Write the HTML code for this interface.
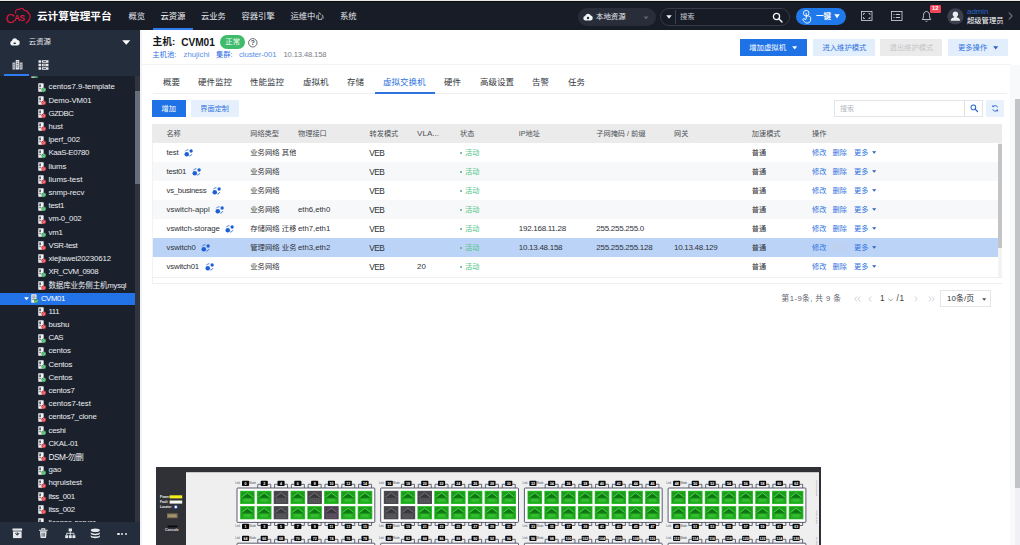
<!DOCTYPE html>
<html lang="zh-CN"><head><meta charset="utf-8"><title>云计算管理平台</title>
<style>
html,body{margin:0;padding:0;}
body{width:1020px;height:545px;overflow:hidden;position:relative;background:#fff;font-family:"Liberation Sans","Noto Sans CJK SC",sans-serif;}
.t{position:absolute;white-space:nowrap;}
.b{position:absolute;}
svg{position:absolute;overflow:visible;}
</style></head><body>

<div class="b" style="left:0px;top:0px;width:1020px;height:545px;background:#f1f3f7;"></div>
<div class="b" style="left:141.5px;top:30.2px;width:878.5px;height:514.8px;background:#ffffff;"></div>
<div class="b" style="left:0px;top:0px;width:1020px;height:30.2px;background:#181c27;"></div>
<div class="b" style="left:0px;top:0px;width:1020px;height:1.8px;background:#0b0c10;"></div>
<div class="b" style="left:0px;top:0px;width:1020px;height:0.8px;background:#e9e9ea;"></div>
<svg style="left:4px;top:5px" width="30" height="22" viewBox="4 5 30 22" font-family='"Liberation Sans",sans-serif'>
<path d="M15.6 13.2 C15 10.4 17 8.6 19.2 9.6 C20.4 7.6 23.6 8 24.2 10.4 C26.4 10.4 28.2 11.8 28.4 13.6" fill="none" stroke="#d8143c" stroke-width="1.1" stroke-linecap="round"/>
<path d="M28.2 12.6 C31.6 15.4 30.4 20.6 26.2 23" fill="none" stroke="#d8143c" stroke-width="1.1" stroke-linecap="round"/>
<text x="14" y="21.4" font-size="8.2" font-weight="700" fill="#e0183f" letter-spacing="-0.3">AS</text>
<text x="5.6" y="22.6" font-size="13" fill="#dc163d">C</text>
</svg>
<span class="t" style="left:36.9px;top:10.15px;font-size:10.7px;line-height:13.91px;color:#ffffff;font-weight:700;">云计算管理平台</span>
<span class="t" style="left:128.5px;top:10.8px;font-size:8.3px;line-height:10.79px;color:#e4e7ec;">概览</span>
<span class="t" style="left:160.5px;top:10.8px;font-size:8.3px;line-height:10.79px;color:#ffffff;">云资源</span>
<span class="t" style="left:201px;top:10.8px;font-size:8.3px;line-height:10.79px;color:#e4e7ec;">云业务</span>
<span class="t" style="left:241.5px;top:10.8px;font-size:8.3px;line-height:10.79px;color:#e4e7ec;">容器引擎</span>
<span class="t" style="left:290.5px;top:10.8px;font-size:8.3px;line-height:10.79px;color:#e4e7ec;">运维中心</span>
<span class="t" style="left:340px;top:10.8px;font-size:8.3px;line-height:10.79px;color:#e4e7ec;">系统</span>
<div class="b" style="left:153px;top:28.2px;width:40px;height:2.2px;background:#2f7cf0;"></div>
<div class="b" style="left:578.3px;top:8.2px;width:78px;height:17.5px;background:#282d39;border-radius:9px;"></div>
<svg style="left:583px;top:12.8px" width="10" height="8" viewBox="0 0 20 16"><path d="M5 15 A4.5 4.5 0 0 1 4.2 6.1 A6 6 0 0 1 15.6 5.2 A5 5 0 0 1 15.5 15 Z" fill="#f2f3f5"/><circle cx="10" cy="10" r="2.4" fill="#282d39"/></svg>
<span class="t" style="left:596px;top:12.29px;font-size:7.4px;line-height:9.62px;color:#e8eaee;">本地资源</span>
<svg style="left:642.5px;top:15.5px" width="6" height="4" viewBox="0 0 6 4"><path d="M0.5 0.5 L5.5 0.5 L3 3.5 Z" fill="#5d6472"/></svg>
<div class="b" style="left:659.5px;top:8.2px;width:130px;height:17.5px;background:#171b25;border-radius:9px;border:1px solid #343a47;box-sizing:border-box;"></div>
<svg style="left:665.5px;top:14.6px" width="6" height="4" viewBox="0 0 6 4"><path d="M0.3 0.3 L5.7 0.3 L3 3.7 Z" fill="#f2f3f5"/></svg>
<div class="b" style="left:675px;top:9.5px;width:0.8px;height:14px;background:#3a414e;"></div>
<span class="t" style="left:680px;top:12.36px;font-size:7.3px;line-height:9.49px;color:#c4c8d0;">搜索</span>
<svg style="left:771.5px;top:11.5px" width="11" height="11" viewBox="0 0 22 22"><circle cx="9" cy="9" r="6.2" fill="none" stroke="#f2f3f5" stroke-width="2.6"/><path d="M13.6 13.6 L20 20" stroke="#f2f3f5" stroke-width="3" stroke-linecap="round"/></svg>
<div class="b" style="left:796px;top:7.8px;width:50px;height:16.9px;background:#2079ea;border-radius:9px;"></div>
<svg style="left:799.8px;top:9.1px" width="13" height="15" viewBox="0 0 26 30"><circle cx="12.4" cy="8.4" r="5.6" fill="none" stroke="#fff" stroke-width="1.8"/><path d="M12.4 8.4 V19.5 M12.4 14.4 C15.4 13.2 19.4 14.2 21.4 16.4 L21 23.6 C20 26.8 17 28.4 13.6 28.2 C10 27.6 7.6 24.4 5.4 20.8 C6 18.6 8.6 19 11.6 21.4" fill="none" stroke="#fff" stroke-width="1.8" stroke-linecap="round" stroke-linejoin="round"/></svg>
<span class="t" style="left:816px;top:11.76px;font-size:7.6px;line-height:9.88px;color:#ffffff;font-weight:700;">一键</span>
<svg style="left:833.5px;top:14.4px" width="6" height="4.5" viewBox="0 0 6 4.5"><path d="M0.2 0.3 L5.8 0.3 L3 4.2 Z" fill="#fff"/></svg>
<svg style="left:861px;top:11px" width="11.5" height="10" viewBox="0 0 23 20"><rect x="1" y="1" width="21" height="18" fill="none" stroke="#d8dbe0" stroke-width="1.6"/><path d="M5 8V5H8 M15 5H18V8 M18 12V15H15 M8 15H5V12" fill="none" stroke="#d8dbe0" stroke-width="1.5"/></svg>
<svg style="left:890.5px;top:11px" width="11.5" height="10" viewBox="0 0 23 20"><rect x="1" y="1" width="21" height="18" fill="none" stroke="#d8dbe0" stroke-width="1.6"/><path d="M5 7H7 M9.5 7H18 M5 13H7 M9.5 13H18" fill="none" stroke="#d8dbe0" stroke-width="1.8"/></svg>
<svg style="left:920.5px;top:10px" width="11" height="12.5" viewBox="0 0 22 25"><path d="M11 3 C6.5 3 5 7 5 11 C5 15 4 17.5 2.5 19 L19.5 19 C18 17.5 17 15 17 11 C17 7 15.5 3 11 3 Z" fill="none" stroke="#d8dbe0" stroke-width="1.7" stroke-linejoin="round"/><path d="M8.6 21.5 C9.5 23.3 12.5 23.3 13.4 21.5" fill="none" stroke="#d8dbe0" stroke-width="1.6"/></svg>
<div class="b" style="left:930px;top:4.5px;width:10.7px;height:8.3px;background:#f0465a;border-radius:1.2px;"></div>
<span class="t" style="left:932.1px;top:4.93px;font-size:5.8px;line-height:7.54px;color:#ffffff;font-weight:700;">12</span>
<svg style="left:947px;top:8.2px" width="16.8" height="16.8" viewBox="0 0 34 34"><circle cx="17" cy="17" r="16.5" fill="#3a404c"/><circle cx="17" cy="12.6" r="5.4" fill="#eceef1"/><path d="M7.5 26 C8 20 12 18.6 17 18.6 C22 18.6 26 20 26.5 26 Z" fill="#eceef1"/><rect x="14.5" y="15" width="5" height="6" fill="#eceef1"/></svg>
<span class="t" style="left:967px;top:6.87px;font-size:7.9px;line-height:10.27px;color:#2a66d0;">admin</span>
<span class="t" style="left:967px;top:16.45px;font-size:7.3px;line-height:9.49px;color:#ffffff;">超级管理员</span>
<svg style="left:1007.5px;top:12px" width="5" height="8" viewBox="0 0 5 8"><path d="M0.8 0.6 L4 4 L0.8 7.4" fill="none" stroke="#5a606c" stroke-width="1.5"/></svg>
<div class="b" style="left:0px;top:30.2px;width:140px;height:46.2px;background:#242d3b;"></div>
<div class="b" style="left:0px;top:76.4px;width:140px;height:445.6px;background:#1b212c;"></div>
<div class="b" style="left:0px;top:522px;width:140px;height:23px;background:#242d3b;"></div>
<svg style="left:9.8px;top:37.2px" width="9.4" height="9.6" viewBox="0 0 20 18" preserveAspectRatio="none"><path d="M5 16 A4.6 4.6 0 0 1 4.2 6.9 A6 6 0 0 1 15.6 5.8 A5.1 5.1 0 0 1 15.5 16 Z" fill="#f2f3f5"/><path d="M7.6 10.5 H12.4 V13.2 H7.6 Z" fill="#242d3b"/></svg>
<span class="t" style="left:28.8px;top:36.99px;font-size:7.4px;line-height:9.62px;color:#e8eaee;">云资源</span>
<svg style="left:122px;top:39.5px" width="8.5" height="5" viewBox="0 0 8.5 5"><path d="M0.2 0.2 L8.3 0.2 L4.25 4.8 Z" fill="#ffffff"/></svg>
<svg style="left:11.5px;top:58.5px" width="11" height="11" viewBox="0 0 22 22"><rect x="1" y="7" width="5.5" height="14" fill="#c9ccd3"/><rect x="15.5" y="7" width="5.5" height="14" fill="#c9ccd3"/><rect x="7.5" y="2" width="7" height="19" fill="#e6e8ec"/><path d="M9.2 5.5H12.8M9.2 9H12.8M9.2 12.5H12.8M9.2 16H12.8M2.6 10.5H5M2.6 14H5M2.6 17.5H5M17 10.5H19.4M17 14H19.4M17 17.5H19.4" stroke="#242d3b" stroke-width="1.3"/></svg>
<svg style="left:37.5px;top:59.5px" width="11" height="10" viewBox="0 0 22 20"><rect x="1" y="0.5" width="5.4" height="5" fill="#e6e8ec"/><rect x="1" y="7.5" width="5.4" height="5" fill="#e6e8ec"/><rect x="1" y="14.5" width="5.4" height="5" fill="#e6e8ec"/><rect x="8" y="0.5" width="13" height="5" fill="#e6e8ec"/><rect x="8" y="7.5" width="13" height="5" fill="#e6e8ec"/><rect x="8" y="14.5" width="13" height="5" fill="#e6e8ec"/><path d="M10 3H16M10 10H16M10 17H16" stroke="#242d3b" stroke-width="1.3"/></svg>
<div class="b" style="left:4px;top:73.8px;width:24.8px;height:2.6px;background:#2f7cf0;"></div>
<div class="b" style="left:135.2px;top:76.4px;width:4.6px;height:445.6px;background:#30343e;"></div>
<div class="b" style="left:135.2px;top:91px;width:4.6px;height:93px;background:#676c7a;"></div>
<div class="b" style="left:0;top:0;width:1020px;height:545px;clip-path:inset(76.4px 884.8px 23px 0)">
<svg style="left:31.2px;top:68.5px" width="7.5" height="9.6" viewBox="0 0 15 19"><rect x="0.5" y="0.5" width="10.5" height="17" rx="0.8" fill="#eef0f3"/><path d="M2.5 4H9M2.5 7.5H9M2.5 11H9" stroke="#5b6270" stroke-width="1.4"/><circle cx="10.4" cy="14" r="4.4" fill="#3aa35a"/></svg>
<span class="t" style="left:42.4px;top:68.4px;font-size:8.0px;line-height:10.4px;color:#aeb3bd;">cvknode1</span>
<svg style="left:38px;top:82.7px" width="9" height="9.5" viewBox="0 0 18 19"><rect x="0.5" y="0.5" width="10.8" height="16.8" rx="0.8" fill="#f1f2f4"/><rect x="2.6" y="3" width="3.2" height="5.4" fill="#4f5563"/><rect x="2.6" y="10.4" width="3.2" height="2" fill="#4f5563"/><circle cx="11.4" cy="13.6" r="4.8" fill="#3aa35a"/><circle cx="11.4" cy="13.6" r="2.1" fill="none" stroke="#ffffff" stroke-opacity="0.75" stroke-width="1"/></svg>
<span class="t" style="left:48.5px;top:82.43px;font-size:7.8px;line-height:10.14px;color:#eceef2;letter-spacing:-0.002px;">centos7.9-template</span>
<svg style="left:38px;top:95.9px" width="9" height="9.5" viewBox="0 0 18 19"><rect x="0.5" y="0.5" width="10.8" height="16.8" rx="0.8" fill="#f1f2f4"/><rect x="2.6" y="3" width="3.2" height="5.4" fill="#4f5563"/><rect x="2.6" y="10.4" width="3.2" height="2" fill="#4f5563"/><circle cx="11.4" cy="13.6" r="4.8" fill="#d2343c"/><circle cx="11.4" cy="13.6" r="2.1" fill="none" stroke="#ffffff" stroke-opacity="0.75" stroke-width="1"/></svg>
<span class="t" style="left:48.5px;top:95.63px;font-size:7.8px;line-height:10.14px;color:#eceef2;letter-spacing:-0.087px;">Demo-VM01</span>
<svg style="left:38px;top:109.1px" width="9" height="9.5" viewBox="0 0 18 19"><rect x="0.5" y="0.5" width="10.8" height="16.8" rx="0.8" fill="#f1f2f4"/><rect x="2.6" y="3" width="3.2" height="5.4" fill="#4f5563"/><rect x="2.6" y="10.4" width="3.2" height="2" fill="#4f5563"/><circle cx="11.4" cy="13.6" r="4.8" fill="#d2343c"/><circle cx="11.4" cy="13.6" r="2.1" fill="none" stroke="#ffffff" stroke-opacity="0.75" stroke-width="1"/></svg>
<span class="t" style="left:48.5px;top:108.83px;font-size:7.8px;line-height:10.14px;color:#eceef2;letter-spacing:-0.5px;">GZDBC</span>
<svg style="left:38px;top:122.3px" width="9" height="9.5" viewBox="0 0 18 19"><rect x="0.5" y="0.5" width="10.8" height="16.8" rx="0.8" fill="#f1f2f4"/><rect x="2.6" y="3" width="3.2" height="5.4" fill="#4f5563"/><rect x="2.6" y="10.4" width="3.2" height="2" fill="#4f5563"/><circle cx="11.4" cy="13.6" r="4.8" fill="#d2343c"/><circle cx="11.4" cy="13.6" r="2.1" fill="none" stroke="#ffffff" stroke-opacity="0.75" stroke-width="1"/></svg>
<span class="t" style="left:48.5px;top:122.03px;font-size:7.8px;line-height:10.14px;color:#eceef2;letter-spacing:-0.111px;">hust</span>
<svg style="left:38px;top:135.5px" width="9" height="9.5" viewBox="0 0 18 19"><rect x="0.5" y="0.5" width="10.8" height="16.8" rx="0.8" fill="#f1f2f4"/><rect x="2.6" y="3" width="3.2" height="5.4" fill="#4f5563"/><rect x="2.6" y="10.4" width="3.2" height="2" fill="#4f5563"/><circle cx="11.4" cy="13.6" r="4.8" fill="#d2343c"/><circle cx="11.4" cy="13.6" r="2.1" fill="none" stroke="#ffffff" stroke-opacity="0.75" stroke-width="1"/></svg>
<span class="t" style="left:48.5px;top:135.23px;font-size:7.8px;line-height:10.14px;color:#eceef2;letter-spacing:-0.114px;">iperf_002</span>
<svg style="left:38px;top:148.7px" width="9" height="9.5" viewBox="0 0 18 19"><rect x="0.5" y="0.5" width="10.8" height="16.8" rx="0.8" fill="#f1f2f4"/><rect x="2.6" y="3" width="3.2" height="5.4" fill="#4f5563"/><rect x="2.6" y="10.4" width="3.2" height="2" fill="#4f5563"/><circle cx="11.4" cy="13.6" r="4.8" fill="#3aa35a"/><circle cx="11.4" cy="13.6" r="2.1" fill="none" stroke="#ffffff" stroke-opacity="0.75" stroke-width="1"/></svg>
<span class="t" style="left:48.5px;top:148.43px;font-size:7.8px;line-height:10.14px;color:#eceef2;letter-spacing:-0.374px;">KaaS-E0780</span>
<svg style="left:38px;top:161.9px" width="9" height="9.5" viewBox="0 0 18 19"><rect x="0.5" y="0.5" width="10.8" height="16.8" rx="0.8" fill="#f1f2f4"/><rect x="2.6" y="3" width="3.2" height="5.4" fill="#4f5563"/><rect x="2.6" y="10.4" width="3.2" height="2" fill="#4f5563"/><circle cx="11.4" cy="13.6" r="4.8" fill="#d2343c"/><circle cx="11.4" cy="13.6" r="2.1" fill="none" stroke="#ffffff" stroke-opacity="0.75" stroke-width="1"/></svg>
<span class="t" style="left:48.5px;top:161.63px;font-size:7.8px;line-height:10.14px;color:#eceef2;letter-spacing:-0.1px;">liums</span>
<svg style="left:38px;top:175.1px" width="9" height="9.5" viewBox="0 0 18 19"><rect x="0.5" y="0.5" width="10.8" height="16.8" rx="0.8" fill="#f1f2f4"/><rect x="2.6" y="3" width="3.2" height="5.4" fill="#4f5563"/><rect x="2.6" y="10.4" width="3.2" height="2" fill="#4f5563"/><circle cx="11.4" cy="13.6" r="4.8" fill="#d2343c"/><circle cx="11.4" cy="13.6" r="2.1" fill="none" stroke="#ffffff" stroke-opacity="0.75" stroke-width="1"/></svg>
<span class="t" style="left:48.5px;top:174.75px;font-size:7.92px;line-height:10.3px;color:#eceef2;letter-spacing:0.001px;">liums-test</span>
<svg style="left:38px;top:188.3px" width="9" height="9.5" viewBox="0 0 18 19"><rect x="0.5" y="0.5" width="10.8" height="16.8" rx="0.8" fill="#f1f2f4"/><rect x="2.6" y="3" width="3.2" height="5.4" fill="#4f5563"/><rect x="2.6" y="10.4" width="3.2" height="2" fill="#4f5563"/><circle cx="11.4" cy="13.6" r="4.8" fill="#3aa35a"/><circle cx="11.4" cy="13.6" r="2.1" fill="none" stroke="#ffffff" stroke-opacity="0.75" stroke-width="1"/></svg>
<span class="t" style="left:48.5px;top:188.03px;font-size:7.8px;line-height:10.14px;color:#eceef2;letter-spacing:-0.068px;">snmp-recv</span>
<svg style="left:38px;top:201.5px" width="9" height="9.5" viewBox="0 0 18 19"><rect x="0.5" y="0.5" width="10.8" height="16.8" rx="0.8" fill="#f1f2f4"/><rect x="2.6" y="3" width="3.2" height="5.4" fill="#4f5563"/><rect x="2.6" y="10.4" width="3.2" height="2" fill="#4f5563"/><circle cx="11.4" cy="13.6" r="4.8" fill="#3aa35a"/><circle cx="11.4" cy="13.6" r="2.1" fill="none" stroke="#ffffff" stroke-opacity="0.75" stroke-width="1"/></svg>
<span class="t" style="left:48.5px;top:201.23px;font-size:7.8px;line-height:10.14px;color:#eceef2;letter-spacing:-0.242px;">test1</span>
<svg style="left:38px;top:214.7px" width="9" height="9.5" viewBox="0 0 18 19"><rect x="0.5" y="0.5" width="10.8" height="16.8" rx="0.8" fill="#f1f2f4"/><rect x="2.6" y="3" width="3.2" height="5.4" fill="#4f5563"/><rect x="2.6" y="10.4" width="3.2" height="2" fill="#4f5563"/><circle cx="11.4" cy="13.6" r="4.8" fill="#d2343c"/><circle cx="11.4" cy="13.6" r="2.1" fill="none" stroke="#ffffff" stroke-opacity="0.75" stroke-width="1"/></svg>
<span class="t" style="left:48.5px;top:214.43px;font-size:7.8px;line-height:10.14px;color:#eceef2;letter-spacing:-0.211px;">vm-0_002</span>
<svg style="left:38px;top:227.9px" width="9" height="9.5" viewBox="0 0 18 19"><rect x="0.5" y="0.5" width="10.8" height="16.8" rx="0.8" fill="#f1f2f4"/><rect x="2.6" y="3" width="3.2" height="5.4" fill="#4f5563"/><rect x="2.6" y="10.4" width="3.2" height="2" fill="#4f5563"/><circle cx="11.4" cy="13.6" r="4.8" fill="#3aa35a"/><circle cx="11.4" cy="13.6" r="2.1" fill="none" stroke="#ffffff" stroke-opacity="0.75" stroke-width="1"/></svg>
<span class="t" style="left:48.5px;top:227.63px;font-size:7.8px;line-height:10.14px;color:#eceef2;letter-spacing:-0.145px;">vm1</span>
<svg style="left:38px;top:241.1px" width="9" height="9.5" viewBox="0 0 18 19"><rect x="0.5" y="0.5" width="10.8" height="16.8" rx="0.8" fill="#f1f2f4"/><rect x="2.6" y="3" width="3.2" height="5.4" fill="#4f5563"/><rect x="2.6" y="10.4" width="3.2" height="2" fill="#4f5563"/><circle cx="11.4" cy="13.6" r="4.8" fill="#d2343c"/><circle cx="11.4" cy="13.6" r="2.1" fill="none" stroke="#ffffff" stroke-opacity="0.75" stroke-width="1"/></svg>
<span class="t" style="left:48.5px;top:240.83px;font-size:7.8px;line-height:10.14px;color:#eceef2;letter-spacing:-0.276px;">VSR-test</span>
<svg style="left:38px;top:254.3px" width="9" height="9.5" viewBox="0 0 18 19"><rect x="0.5" y="0.5" width="10.8" height="16.8" rx="0.8" fill="#f1f2f4"/><rect x="2.6" y="3" width="3.2" height="5.4" fill="#4f5563"/><rect x="2.6" y="10.4" width="3.2" height="2" fill="#4f5563"/><circle cx="11.4" cy="13.6" r="4.8" fill="#d2343c"/><circle cx="11.4" cy="13.6" r="2.1" fill="none" stroke="#ffffff" stroke-opacity="0.75" stroke-width="1"/></svg>
<span class="t" style="left:48.5px;top:254.03px;font-size:7.8px;line-height:10.14px;color:#eceef2;letter-spacing:-0.099px;">xiejiawei20230612</span>
<svg style="left:38px;top:267.5px" width="9" height="9.5" viewBox="0 0 18 19"><rect x="0.5" y="0.5" width="10.8" height="16.8" rx="0.8" fill="#f1f2f4"/><rect x="2.6" y="3" width="3.2" height="5.4" fill="#4f5563"/><rect x="2.6" y="10.4" width="3.2" height="2" fill="#4f5563"/><circle cx="11.4" cy="13.6" r="4.8" fill="#3aa35a"/><circle cx="11.4" cy="13.6" r="2.1" fill="none" stroke="#ffffff" stroke-opacity="0.75" stroke-width="1"/></svg>
<span class="t" style="left:48.5px;top:267.23px;font-size:7.8px;line-height:10.14px;color:#eceef2;letter-spacing:-0.418px;">XR_CVM_0908</span>
<svg style="left:38px;top:280.7px" width="9" height="9.5" viewBox="0 0 18 19"><rect x="0.5" y="0.5" width="10.8" height="16.8" rx="0.8" fill="#f1f2f4"/><rect x="2.6" y="3" width="3.2" height="5.4" fill="#4f5563"/><rect x="2.6" y="10.4" width="3.2" height="2" fill="#4f5563"/><circle cx="11.4" cy="13.6" r="4.8" fill="#d2343c"/><circle cx="11.4" cy="13.6" r="2.1" fill="none" stroke="#ffffff" stroke-opacity="0.75" stroke-width="1"/></svg>
<span class="t" style="left:48.5px;top:280.62px;font-size:7.5px;line-height:9.75px;color:#eceef2;letter-spacing:-0.137px;">数据库业务侧主机mysql</span>
<div class="b" style="left:0px;top:292.5px;width:135.2px;height:12.0px;background:#2273e8;"></div>
<svg style="left:24.4px;top:296.9px" width="5" height="3.4" viewBox="0 0 5 3.4"><path d="M0.1 0.2 L4.9 0.2 L2.5 3.3 Z" fill="#ffffff"/></svg>
<svg style="left:31.2px;top:293.7px" width="7.5" height="9.6" viewBox="0 0 15 19"><rect x="0.5" y="0.5" width="10.5" height="17" rx="0.8" fill="#eef0f3"/><path d="M2.5 4H9M2.5 7.5H9M2.5 11H9" stroke="#5b6270" stroke-width="1.4"/><circle cx="10.4" cy="14" r="4.4" fill="#3aa35a"/><path d="M8.2 14 L9.8 15.6 L12.6 12.4" fill="none" stroke="#fff" stroke-width="1.2"/></svg>
<span class="t" style="left:40.9px;top:293.63px;font-size:7.8px;line-height:10.14px;color:#ffffff;letter-spacing:-0.402px;">CVM01</span>
<svg style="left:38px;top:307.1px" width="9" height="9.5" viewBox="0 0 18 19"><rect x="0.5" y="0.5" width="10.8" height="16.8" rx="0.8" fill="#f1f2f4"/><rect x="2.6" y="3" width="3.2" height="5.4" fill="#4f5563"/><rect x="2.6" y="10.4" width="3.2" height="2" fill="#4f5563"/><circle cx="11.4" cy="13.6" r="4.8" fill="#d2343c"/><circle cx="11.4" cy="13.6" r="2.1" fill="none" stroke="#ffffff" stroke-opacity="0.75" stroke-width="1"/></svg>
<span class="t" style="left:48.5px;top:306.83px;font-size:7.8px;line-height:10.14px;color:#eceef2;letter-spacing:-0.438px;">111</span>
<svg style="left:38px;top:320.3px" width="9" height="9.5" viewBox="0 0 18 19"><rect x="0.5" y="0.5" width="10.8" height="16.8" rx="0.8" fill="#f1f2f4"/><rect x="2.6" y="3" width="3.2" height="5.4" fill="#4f5563"/><rect x="2.6" y="10.4" width="3.2" height="2" fill="#4f5563"/><circle cx="11.4" cy="13.6" r="4.8" fill="#d2343c"/><circle cx="11.4" cy="13.6" r="2.1" fill="none" stroke="#ffffff" stroke-opacity="0.75" stroke-width="1"/></svg>
<span class="t" style="left:48.5px;top:320.03px;font-size:7.8px;line-height:10.14px;color:#eceef2;letter-spacing:-0.071px;">bushu</span>
<svg style="left:38px;top:333.5px" width="9" height="9.5" viewBox="0 0 18 19"><rect x="0.5" y="0.5" width="10.8" height="16.8" rx="0.8" fill="#f1f2f4"/><rect x="2.6" y="3" width="3.2" height="5.4" fill="#4f5563"/><rect x="2.6" y="10.4" width="3.2" height="2" fill="#4f5563"/><circle cx="11.4" cy="13.6" r="4.8" fill="#3aa35a"/><circle cx="11.4" cy="13.6" r="2.1" fill="none" stroke="#ffffff" stroke-opacity="0.75" stroke-width="1"/></svg>
<span class="t" style="left:48.5px;top:333.23px;font-size:7.8px;line-height:10.14px;color:#eceef2;letter-spacing:-0.5px;">CAS</span>
<svg style="left:38px;top:346.7px" width="9" height="9.5" viewBox="0 0 18 19"><rect x="0.5" y="0.5" width="10.8" height="16.8" rx="0.8" fill="#f1f2f4"/><rect x="2.6" y="3" width="3.2" height="5.4" fill="#4f5563"/><rect x="2.6" y="10.4" width="3.2" height="2" fill="#4f5563"/><circle cx="11.4" cy="13.6" r="4.8" fill="#3aa35a"/><circle cx="11.4" cy="13.6" r="2.1" fill="none" stroke="#ffffff" stroke-opacity="0.75" stroke-width="1"/></svg>
<span class="t" style="left:48.5px;top:346.43px;font-size:7.8px;line-height:10.14px;color:#eceef2;letter-spacing:-0.097px;">centos</span>
<svg style="left:38px;top:359.9px" width="9" height="9.5" viewBox="0 0 18 19"><rect x="0.5" y="0.5" width="10.8" height="16.8" rx="0.8" fill="#f1f2f4"/><rect x="2.6" y="3" width="3.2" height="5.4" fill="#4f5563"/><rect x="2.6" y="10.4" width="3.2" height="2" fill="#4f5563"/><circle cx="11.4" cy="13.6" r="4.8" fill="#3aa35a"/><circle cx="11.4" cy="13.6" r="2.1" fill="none" stroke="#ffffff" stroke-opacity="0.75" stroke-width="1"/></svg>
<span class="t" style="left:48.5px;top:359.63px;font-size:7.8px;line-height:10.14px;color:#eceef2;letter-spacing:-0.152px;">Centos</span>
<svg style="left:38px;top:373.1px" width="9" height="9.5" viewBox="0 0 18 19"><rect x="0.5" y="0.5" width="10.8" height="16.8" rx="0.8" fill="#f1f2f4"/><rect x="2.6" y="3" width="3.2" height="5.4" fill="#4f5563"/><rect x="2.6" y="10.4" width="3.2" height="2" fill="#4f5563"/><circle cx="11.4" cy="13.6" r="4.8" fill="#3aa35a"/><circle cx="11.4" cy="13.6" r="2.1" fill="none" stroke="#ffffff" stroke-opacity="0.75" stroke-width="1"/></svg>
<span class="t" style="left:48.5px;top:372.83px;font-size:7.8px;line-height:10.14px;color:#eceef2;letter-spacing:-0.152px;">Centos</span>
<svg style="left:38px;top:386.3px" width="9" height="9.5" viewBox="0 0 18 19"><rect x="0.5" y="0.5" width="10.8" height="16.8" rx="0.8" fill="#f1f2f4"/><rect x="2.6" y="3" width="3.2" height="5.4" fill="#4f5563"/><rect x="2.6" y="10.4" width="3.2" height="2" fill="#4f5563"/><circle cx="11.4" cy="13.6" r="4.8" fill="#d2343c"/><circle cx="11.4" cy="13.6" r="2.1" fill="none" stroke="#ffffff" stroke-opacity="0.75" stroke-width="1"/></svg>
<span class="t" style="left:48.5px;top:386.03px;font-size:7.8px;line-height:10.14px;color:#eceef2;letter-spacing:-0.16px;">centos7</span>
<svg style="left:38px;top:399.5px" width="9" height="9.5" viewBox="0 0 18 19"><rect x="0.5" y="0.5" width="10.8" height="16.8" rx="0.8" fill="#f1f2f4"/><rect x="2.6" y="3" width="3.2" height="5.4" fill="#4f5563"/><rect x="2.6" y="10.4" width="3.2" height="2" fill="#4f5563"/><circle cx="11.4" cy="13.6" r="4.8" fill="#d2343c"/><circle cx="11.4" cy="13.6" r="2.1" fill="none" stroke="#ffffff" stroke-opacity="0.75" stroke-width="1"/></svg>
<span class="t" style="left:48.5px;top:399.23px;font-size:7.8px;line-height:10.14px;color:#eceef2;letter-spacing:-0.016px;">centos7-test</span>
<svg style="left:38px;top:412.7px" width="9" height="9.5" viewBox="0 0 18 19"><rect x="0.5" y="0.5" width="10.8" height="16.8" rx="0.8" fill="#f1f2f4"/><rect x="2.6" y="3" width="3.2" height="5.4" fill="#4f5563"/><rect x="2.6" y="10.4" width="3.2" height="2" fill="#4f5563"/><circle cx="11.4" cy="13.6" r="4.8" fill="#d2343c"/><circle cx="11.4" cy="13.6" r="2.1" fill="none" stroke="#ffffff" stroke-opacity="0.75" stroke-width="1"/></svg>
<span class="t" style="left:48.5px;top:412.43px;font-size:7.8px;line-height:10.14px;color:#eceef2;letter-spacing:-0.17px;">centos7_clone</span>
<svg style="left:38px;top:425.9px" width="9" height="9.5" viewBox="0 0 18 19"><rect x="0.5" y="0.5" width="10.8" height="16.8" rx="0.8" fill="#f1f2f4"/><rect x="2.6" y="3" width="3.2" height="5.4" fill="#4f5563"/><rect x="2.6" y="10.4" width="3.2" height="2" fill="#4f5563"/><circle cx="11.4" cy="13.6" r="4.8" fill="#3aa35a"/><circle cx="11.4" cy="13.6" r="2.1" fill="none" stroke="#ffffff" stroke-opacity="0.75" stroke-width="1"/></svg>
<span class="t" style="left:48.5px;top:425.63px;font-size:7.8px;line-height:10.14px;color:#eceef2;letter-spacing:-0.242px;">ceshi</span>
<svg style="left:38px;top:439.1px" width="9" height="9.5" viewBox="0 0 18 19"><rect x="0.5" y="0.5" width="10.8" height="16.8" rx="0.8" fill="#f1f2f4"/><rect x="2.6" y="3" width="3.2" height="5.4" fill="#4f5563"/><rect x="2.6" y="10.4" width="3.2" height="2" fill="#4f5563"/><circle cx="11.4" cy="13.6" r="4.8" fill="#d2343c"/><circle cx="11.4" cy="13.6" r="2.1" fill="none" stroke="#ffffff" stroke-opacity="0.75" stroke-width="1"/></svg>
<span class="t" style="left:48.5px;top:438.83px;font-size:7.8px;line-height:10.14px;color:#eceef2;letter-spacing:-0.293px;">CKAL-01</span>
<svg style="left:38px;top:452.3px" width="9" height="9.5" viewBox="0 0 18 19"><rect x="0.5" y="0.5" width="10.8" height="16.8" rx="0.8" fill="#f1f2f4"/><rect x="2.6" y="3" width="3.2" height="5.4" fill="#4f5563"/><rect x="2.6" y="10.4" width="3.2" height="2" fill="#4f5563"/><circle cx="11.4" cy="13.6" r="4.8" fill="#d2343c"/><circle cx="11.4" cy="13.6" r="2.1" fill="none" stroke="#ffffff" stroke-opacity="0.75" stroke-width="1"/></svg>
<span class="t" style="left:48.5px;top:451.7px;font-size:8.3px;line-height:10.79px;color:#eceef2;letter-spacing:-0.5px;">DSM-勿删</span>
<svg style="left:38px;top:465.5px" width="9" height="9.5" viewBox="0 0 18 19"><rect x="0.5" y="0.5" width="10.8" height="16.8" rx="0.8" fill="#f1f2f4"/><rect x="2.6" y="3" width="3.2" height="5.4" fill="#4f5563"/><rect x="2.6" y="10.4" width="3.2" height="2" fill="#4f5563"/><circle cx="11.4" cy="13.6" r="4.8" fill="#3aa35a"/><circle cx="11.4" cy="13.6" r="2.1" fill="none" stroke="#ffffff" stroke-opacity="0.75" stroke-width="1"/></svg>
<span class="t" style="left:48.5px;top:465.23px;font-size:7.8px;line-height:10.14px;color:#eceef2;letter-spacing:-0.138px;">gao</span>
<svg style="left:38px;top:478.7px" width="9" height="9.5" viewBox="0 0 18 19"><rect x="0.5" y="0.5" width="10.8" height="16.8" rx="0.8" fill="#f1f2f4"/><rect x="2.6" y="3" width="3.2" height="5.4" fill="#4f5563"/><rect x="2.6" y="10.4" width="3.2" height="2" fill="#4f5563"/><circle cx="11.4" cy="13.6" r="4.8" fill="#d2343c"/><circle cx="11.4" cy="13.6" r="2.1" fill="none" stroke="#ffffff" stroke-opacity="0.75" stroke-width="1"/></svg>
<span class="t" style="left:48.5px;top:478.43px;font-size:7.8px;line-height:10.14px;color:#eceef2;letter-spacing:-0.032px;">hqruistest</span>
<svg style="left:38px;top:491.9px" width="9" height="9.5" viewBox="0 0 18 19"><rect x="0.5" y="0.5" width="10.8" height="16.8" rx="0.8" fill="#f1f2f4"/><rect x="2.6" y="3" width="3.2" height="5.4" fill="#4f5563"/><rect x="2.6" y="10.4" width="3.2" height="2" fill="#4f5563"/><circle cx="11.4" cy="13.6" r="4.8" fill="#d2343c"/><circle cx="11.4" cy="13.6" r="2.1" fill="none" stroke="#ffffff" stroke-opacity="0.75" stroke-width="1"/></svg>
<span class="t" style="left:48.5px;top:491.63px;font-size:7.8px;line-height:10.14px;color:#eceef2;letter-spacing:-0.357px;">itss_001</span>
<svg style="left:38px;top:505.1px" width="9" height="9.5" viewBox="0 0 18 19"><rect x="0.5" y="0.5" width="10.8" height="16.8" rx="0.8" fill="#f1f2f4"/><rect x="2.6" y="3" width="3.2" height="5.4" fill="#4f5563"/><rect x="2.6" y="10.4" width="3.2" height="2" fill="#4f5563"/><circle cx="11.4" cy="13.6" r="4.8" fill="#d2343c"/><circle cx="11.4" cy="13.6" r="2.1" fill="none" stroke="#ffffff" stroke-opacity="0.75" stroke-width="1"/></svg>
<span class="t" style="left:48.5px;top:504.83px;font-size:7.8px;line-height:10.14px;color:#eceef2;letter-spacing:-0.357px;">itss_002</span>
<svg style="left:38px;top:518.3px" width="9" height="9.5" viewBox="0 0 18 19"><rect x="0.5" y="0.5" width="10.8" height="16.8" rx="0.8" fill="#f1f2f4"/><rect x="2.6" y="3" width="3.2" height="5.4" fill="#4f5563"/><rect x="2.6" y="10.4" width="3.2" height="2" fill="#4f5563"/><circle cx="11.4" cy="13.6" r="4.8" fill="#d2343c"/><circle cx="11.4" cy="13.6" r="2.1" fill="none" stroke="#ffffff" stroke-opacity="0.75" stroke-width="1"/></svg>
<span class="t" style="left:48.5px;top:518.03px;font-size:7.8px;line-height:10.14px;color:#eceef2;letter-spacing:-0.111px;">license-server</span>
</div>
<svg style="left:11.5px;top:528.1px" width="10.6" height="10.6" viewBox="0 0 22 22"><rect x="1" y="1" width="20" height="4.6" fill="#e6e8ec"/><rect x="2" y="7" width="18" height="14" fill="#e6e8ec"/><path d="M7 10.5 L11 15 L15 10.5 M11 9 V14.5" stroke="#242d3b" stroke-width="2" fill="none"/></svg>
<svg style="left:38px;top:528.1px" width="10.6" height="10.6" viewBox="0 0 22 22"><path d="M2 4.5H20M8 4V1.6H14V4" stroke="#e6e8ec" stroke-width="2.2" fill="none"/><path d="M4 7H18L16.6 21H5.4Z" fill="#e6e8ec"/><path d="M8.4 10V18M11 10V18M13.6 10V18" stroke="#242d3b" stroke-width="1.2"/></svg>
<svg style="left:64.5px;top:528.1px" width="10.6" height="10.6" viewBox="0 0 22 22"><rect x="7.5" y="1" width="7" height="6" fill="#e6e8ec"/><rect x="0.5" y="15" width="6" height="6" fill="#e6e8ec"/><rect x="8" y="15" width="6" height="6" fill="#e6e8ec"/><rect x="15.5" y="15" width="6" height="6" fill="#e6e8ec"/><path d="M11 7V15M3.5 15V11H18.5V15" stroke="#e6e8ec" stroke-width="1.8" fill="none"/></svg>
<svg style="left:90px;top:528.1px" width="10.6" height="10.6" viewBox="0 0 22 22"><ellipse cx="11" cy="4.6" rx="9.5" ry="3.8" fill="#e6e8ec"/><path d="M1.5 8.4C1.5 13 20.5 13 20.5 8.4V11.6C20.5 16.2 1.5 16.2 1.5 11.6Z" fill="#e6e8ec"/><path d="M1.5 14.4C1.5 19 20.5 19 20.5 14.4V17.6C20.5 22.2 1.5 22.2 1.5 17.6Z" fill="#e6e8ec"/></svg>
<div class="b" style="left:117.4px;top:533px;width:2.2px;height:2.2px;background:#e6e8ec;border-radius:50%;"></div>
<div class="b" style="left:121.10000000000001px;top:533px;width:2.2px;height:2.2px;background:#e6e8ec;border-radius:50%;"></div>
<div class="b" style="left:124.80000000000001px;top:533px;width:2.2px;height:2.2px;background:#e6e8ec;border-radius:50%;"></div>
<span class="t" style="left:152.4px;top:36.03px;font-size:9.8px;line-height:12.74px;color:#15171a;font-weight:700;">主机:</span>
<span class="t" style="left:181.3px;top:35.64px;font-size:10.1px;line-height:13.13px;color:#15171a;font-weight:700;letter-spacing:-0.05px;">CVM01</span>
<div class="b" style="left:219.9px;top:35.0px;width:25.6px;height:13.9px;background:#3fbb6c;border-radius:7px;"></div>
<span class="t" style="left:225.3px;top:37.29px;font-size:7.4px;line-height:9.62px;color:#f4fbf6;">正常</span>
<svg style="left:248px;top:37.9px" width="9.6" height="9.6" viewBox="0 0 18 18"><circle cx="9" cy="9" r="7.9" fill="none" stroke="#41464f" stroke-width="1.5"/><text x="9" y="13.4" font-size="12.5" font-weight="700" text-anchor="middle" fill="#41464f" font-family='"Liberation Sans",sans-serif'>?</text></svg>
<span class="t" style="left:152.3px;top:50.26px;font-size:7.3px;line-height:9.49px;color:#2f6fe4;">主机池:</span>
<span class="t" style="left:183.5px;top:50.03px;font-size:7.8px;line-height:10.14px;color:#5a8fe8;">zhujichi</span>
<span class="t" style="left:216px;top:50.26px;font-size:7.3px;line-height:9.49px;color:#2f6fe4;">集群:</span>
<span class="t" style="left:239px;top:50.03px;font-size:7.8px;line-height:10.14px;color:#5a8fe8;letter-spacing:-0.1px;">cluster-001</span>
<span class="t" style="left:283.5px;top:50.16px;font-size:7.6px;line-height:9.88px;color:#7b8088;letter-spacing:-0.12px;">10.13.48.158</span>
<div class="b" style="left:739.5px;top:38.8px;width:67.5px;height:17.4px;background:#1f72e6;"></div>
<span class="t" style="left:749.2px;top:42.59px;font-size:7.4px;line-height:9.62px;color:#ffffff;">增加虚拟机</span>
<svg style="left:791.6px;top:45.6px" width="5.4" height="3.6" viewBox="0 0 6 4"><path d="M0.2 0.2 L5.8 0.2 L3 3.8 Z" fill="#fff"/></svg>
<div class="b" style="left:813px;top:38.8px;width:61.5px;height:17.4px;background:#e3eefc;"></div>
<span class="t" style="left:822.5px;top:42.66px;font-size:7.3px;line-height:9.49px;color:#2f73e0;">进入维护模式</span>
<div class="b" style="left:880px;top:38.8px;width:61.5px;height:17.4px;background:#ebebeb;"></div>
<span class="t" style="left:889.5px;top:42.66px;font-size:7.3px;line-height:9.49px;color:#c4c6ca;">退出维护模式</span>
<div class="b" style="left:948px;top:38.8px;width:59.5px;height:17.4px;background:#e3eefc;"></div>
<span class="t" style="left:958px;top:42.66px;font-size:7.3px;line-height:9.49px;color:#2f73e0;">更多操作</span>
<svg style="left:992.5px;top:45.6px" width="5.4" height="3.6" viewBox="0 0 6 4"><path d="M0.2 0.2 L5.8 0.2 L3 3.8 Z" fill="#2b5fb8"/></svg>
<div class="b" style="left:141.5px;top:63.6px;width:869px;height:1.2px;background:#f1f3f6;"></div>
<span class="t" style="left:163px;top:77.17px;font-size:8.5px;line-height:11.05px;color:#33373d;">概要</span>
<span class="t" style="left:198px;top:77.17px;font-size:8.5px;line-height:11.05px;color:#33373d;">硬件监控</span>
<span class="t" style="left:250px;top:77.17px;font-size:8.5px;line-height:11.05px;color:#33373d;">性能监控</span>
<span class="t" style="left:303px;top:77.17px;font-size:8.5px;line-height:11.05px;color:#33373d;">虚拟机</span>
<span class="t" style="left:347px;top:77.17px;font-size:8.5px;line-height:11.05px;color:#33373d;">存储</span>
<span class="t" style="left:383px;top:77.17px;font-size:8.5px;line-height:11.05px;color:#2f73e0;">虚拟交换机</span>
<span class="t" style="left:444px;top:77.17px;font-size:8.5px;line-height:11.05px;color:#33373d;">硬件</span>
<span class="t" style="left:480px;top:77.17px;font-size:8.5px;line-height:11.05px;color:#33373d;">高级设置</span>
<span class="t" style="left:532px;top:77.17px;font-size:8.5px;line-height:11.05px;color:#33373d;">告警</span>
<span class="t" style="left:568px;top:77.17px;font-size:8.5px;line-height:11.05px;color:#33373d;">任务</span>
<div class="b" style="left:152.5px;top:93.0px;width:854.5px;height:0.9px;background:#eceef2;"></div>
<div class="b" style="left:375px;top:92.1px;width:59.5px;height:1.8px;background:#2f73e0;"></div>
<div class="b" style="left:152.3px;top:100.2px;width:33.4px;height:16.8px;background:#1f72e6;"></div>
<span class="t" style="left:161.6px;top:104.02px;font-size:7.2px;line-height:9.36px;color:#ffffff;">增加</span>
<div class="b" style="left:191px;top:100.2px;width:47.6px;height:16.8px;background:#e6f0fd;"></div>
<span class="t" style="left:200.3px;top:104.02px;font-size:7.2px;line-height:9.36px;color:#2f73e0;">界面定制</span>
<div class="b" style="left:833.6px;top:99.8px;width:149px;height:17.2px;background:#ffffff;border:1px solid #e1e4e9;box-sizing:border-box;"></div>
<div class="b" style="left:964.2px;top:100.6px;width:0.9px;height:15.6px;background:#dcdfe5;"></div>
<span class="t" style="left:840px;top:104.05px;font-size:7px;line-height:9.1px;color:#b5b9c1;">搜索</span>
<svg style="left:969.5px;top:104.4px" width="8.4" height="8.4" viewBox="0 0 20 20"><circle cx="8" cy="8" r="5.6" fill="none" stroke="#2a66cc" stroke-width="2.6"/><path d="M12.2 12.2 L18 18" stroke="#2a66cc" stroke-width="3" stroke-linecap="round"/></svg>
<div class="b" style="left:986.4px;top:99.8px;width:17.2px;height:17.2px;background:#e9f1fd;"></div>
<svg style="left:991px;top:104.2px" width="8.4" height="8.8" viewBox="0 0 20 21"><path d="M15.8 8.2 A6.2 6.2 0 0 0 5 6.2" fill="none" stroke="#2a66cc" stroke-width="2.2"/><path d="M4.2 12.8 A6.2 6.2 0 0 0 15 14.8" fill="none" stroke="#2a66cc" stroke-width="2.2"/><path d="M3 2.6 L3.6 8 L8.8 6.6 Z" fill="#2a66cc"/><path d="M17 18.4 L16.4 13 L11.2 14.4 Z" fill="#2a66cc"/></svg>
<div class="b" style="left:152.4px;top:124.3px;width:850px;height:18.8px;background:#ebebeb;"></div>
<span class="t" style="left:166.4px;top:129.12px;font-size:7.2px;line-height:9.36px;color:#4d5259;">名称</span>
<span class="t" style="left:250.2px;top:129.12px;font-size:7.2px;line-height:9.36px;color:#4d5259;">网络类型</span>
<span class="t" style="left:298px;top:129.12px;font-size:7.2px;line-height:9.36px;color:#4d5259;">物理接口</span>
<span class="t" style="left:369.5px;top:129.12px;font-size:7.2px;line-height:9.36px;color:#4d5259;">转发模式</span>
<span class="t" style="left:417px;top:128.64px;font-size:8.1px;line-height:10.53px;color:#4d5259;">VLA...</span>
<span class="t" style="left:460px;top:129.12px;font-size:7.2px;line-height:9.36px;color:#4d5259;">状态</span>
<span class="t" style="left:518.8px;top:129.12px;font-size:7.2px;line-height:9.36px;color:#4d5259;">IP地址</span>
<span class="t" style="left:596.3px;top:129.12px;font-size:7.2px;line-height:9.36px;color:#4d5259;">子网掩码 / 前缀</span>
<span class="t" style="left:674px;top:129.12px;font-size:7.2px;line-height:9.36px;color:#4d5259;">网关</span>
<span class="t" style="left:751.8px;top:129.12px;font-size:7.2px;line-height:9.36px;color:#4d5259;">加速模式</span>
<span class="t" style="left:812px;top:129.12px;font-size:7.2px;line-height:9.36px;color:#4d5259;">操作</span>
<span class="t" style="left:166.6px;top:148.13px;font-size:7.8px;line-height:10.14px;color:#2f3338;letter-spacing:-0.143px;">test</span>
<svg style="left:184.2px;top:148.7px" width="9.4" height="8" viewBox="0 0 19 16"><circle cx="5.6" cy="10.6" r="4.6" fill="#1f5fd6"/><circle cx="14.4" cy="4" r="3.4" fill="#1f5fd6"/><path d="M2.6 4.6 A6.5 6.5 0 0 1 9 1.4" fill="none" stroke="#1f5fd6" stroke-width="1.6"/><path d="M10.6 14.4 A6.5 6.5 0 0 0 16 10.2" fill="none" stroke="#1f5fd6" stroke-width="1.6"/></svg>
<span class="t" style="left:250.2px;top:148.2px;width:45.9px;overflow:hidden;font-size:7.4px;line-height:9.6px;color:#2f3338">业务网络 其他</span>
<span class="t" style="left:369.3px;top:147.91px;font-size:8.3px;line-height:10.79px;color:#2f3338;letter-spacing:-0.6px;">VEB</span>
<div class="b" style="left:459.7px;top:151.6px;width:2.8px;height:2.8px;background:#55b07c;border-radius:50%;"></div>
<span class="t" style="left:465px;top:148.37px;font-size:7.2px;line-height:9.36px;color:#4fc385;">活动</span>
<span class="t" style="left:751.8px;top:148.37px;font-size:7.2px;line-height:9.36px;color:#2f3338;">普通</span>
<span class="t" style="left:812px;top:148.37px;font-size:7.2px;line-height:9.36px;color:#2f73e0;">修改</span>
<span class="t" style="left:832.5px;top:148.37px;font-size:7.2px;line-height:9.36px;color:#2f73e0;">删除</span>
<span class="t" style="left:854px;top:148.37px;font-size:7.2px;line-height:9.36px;color:#2f73e0;">更多</span>
<svg style="left:872px;top:151.0px" width="4.4" height="3" viewBox="0 0 6 4"><path d="M0.2 0.2 L5.8 0.2 L3 3.8 Z" fill="#2b5fb8"/></svg>
<div class="b" style="left:152.4px;top:162.1px;width:845.4px;height:19.0px;background:#f7f8f9;"></div>
<span class="t" style="left:166.6px;top:167.13px;font-size:7.8px;line-height:10.14px;color:#2f3338;letter-spacing:-0.275px;">test01</span>
<svg style="left:191.8px;top:167.7px" width="9.4" height="8" viewBox="0 0 19 16"><circle cx="5.6" cy="10.6" r="4.6" fill="#1f5fd6"/><circle cx="14.4" cy="4" r="3.4" fill="#1f5fd6"/><path d="M2.6 4.6 A6.5 6.5 0 0 1 9 1.4" fill="none" stroke="#1f5fd6" stroke-width="1.6"/><path d="M10.6 14.4 A6.5 6.5 0 0 0 16 10.2" fill="none" stroke="#1f5fd6" stroke-width="1.6"/></svg>
<span class="t" style="left:250.2px;top:167.2px;width:45.9px;overflow:hidden;font-size:7.4px;line-height:9.6px;color:#2f3338">业务网络</span>
<span class="t" style="left:369.3px;top:166.91px;font-size:8.3px;line-height:10.79px;color:#2f3338;letter-spacing:-0.6px;">VEB</span>
<div class="b" style="left:459.7px;top:170.6px;width:2.8px;height:2.8px;background:#55b07c;border-radius:50%;"></div>
<span class="t" style="left:465px;top:167.37px;font-size:7.2px;line-height:9.36px;color:#4fc385;">活动</span>
<span class="t" style="left:751.8px;top:167.37px;font-size:7.2px;line-height:9.36px;color:#2f3338;">普通</span>
<span class="t" style="left:812px;top:167.37px;font-size:7.2px;line-height:9.36px;color:#2f73e0;">修改</span>
<span class="t" style="left:832.5px;top:167.37px;font-size:7.2px;line-height:9.36px;color:#2f73e0;">删除</span>
<span class="t" style="left:854px;top:167.37px;font-size:7.2px;line-height:9.36px;color:#2f73e0;">更多</span>
<svg style="left:872px;top:170.0px" width="4.4" height="3" viewBox="0 0 6 4"><path d="M0.2 0.2 L5.8 0.2 L3 3.8 Z" fill="#2b5fb8"/></svg>
<span class="t" style="left:166.6px;top:186.13px;font-size:7.8px;line-height:10.14px;color:#2f3338;letter-spacing:-0.293px;">vs_business</span>
<svg style="left:211.9px;top:186.7px" width="9.4" height="8" viewBox="0 0 19 16"><circle cx="5.6" cy="10.6" r="4.6" fill="#1f5fd6"/><circle cx="14.4" cy="4" r="3.4" fill="#1f5fd6"/><path d="M2.6 4.6 A6.5 6.5 0 0 1 9 1.4" fill="none" stroke="#1f5fd6" stroke-width="1.6"/><path d="M10.6 14.4 A6.5 6.5 0 0 0 16 10.2" fill="none" stroke="#1f5fd6" stroke-width="1.6"/></svg>
<span class="t" style="left:250.2px;top:186.2px;width:45.9px;overflow:hidden;font-size:7.4px;line-height:9.6px;color:#2f3338">业务网络</span>
<span class="t" style="left:369.3px;top:185.91px;font-size:8.3px;line-height:10.79px;color:#2f3338;letter-spacing:-0.6px;">VEB</span>
<div class="b" style="left:459.7px;top:189.6px;width:2.8px;height:2.8px;background:#55b07c;border-radius:50%;"></div>
<span class="t" style="left:465px;top:186.37px;font-size:7.2px;line-height:9.36px;color:#4fc385;">活动</span>
<span class="t" style="left:751.8px;top:186.37px;font-size:7.2px;line-height:9.36px;color:#2f3338;">普通</span>
<span class="t" style="left:812px;top:186.37px;font-size:7.2px;line-height:9.36px;color:#2f73e0;">修改</span>
<span class="t" style="left:832.5px;top:186.37px;font-size:7.2px;line-height:9.36px;color:#2f73e0;">删除</span>
<span class="t" style="left:854px;top:186.37px;font-size:7.2px;line-height:9.36px;color:#2f73e0;">更多</span>
<svg style="left:872px;top:189.0px" width="4.4" height="3" viewBox="0 0 6 4"><path d="M0.2 0.2 L5.8 0.2 L3 3.8 Z" fill="#2b5fb8"/></svg>
<div class="b" style="left:152.4px;top:200.1px;width:845.4px;height:19.0px;background:#f7f8f9;"></div>
<span class="t" style="left:166.6px;top:205.11px;font-size:7.83px;line-height:10.18px;color:#2f3338;letter-spacing:0.002px;">vswitch-appl</span>
<svg style="left:215.3px;top:205.7px" width="9.4" height="8" viewBox="0 0 19 16"><circle cx="5.6" cy="10.6" r="4.6" fill="#1f5fd6"/><circle cx="14.4" cy="4" r="3.4" fill="#1f5fd6"/><path d="M2.6 4.6 A6.5 6.5 0 0 1 9 1.4" fill="none" stroke="#1f5fd6" stroke-width="1.6"/><path d="M10.6 14.4 A6.5 6.5 0 0 0 16 10.2" fill="none" stroke="#1f5fd6" stroke-width="1.6"/></svg>
<span class="t" style="left:250.2px;top:205.2px;width:45.9px;overflow:hidden;font-size:7.4px;line-height:9.6px;color:#2f3338">业务网络</span>
<span class="t" style="left:298px;top:205.13px;font-size:7.8px;line-height:10.14px;color:#2f3338;letter-spacing:-0.037px;">eth6,eth0</span>
<span class="t" style="left:369.3px;top:204.91px;font-size:8.3px;line-height:10.79px;color:#2f3338;letter-spacing:-0.6px;">VEB</span>
<div class="b" style="left:459.7px;top:208.6px;width:2.8px;height:2.8px;background:#55b07c;border-radius:50%;"></div>
<span class="t" style="left:465px;top:205.37px;font-size:7.2px;line-height:9.36px;color:#4fc385;">活动</span>
<span class="t" style="left:751.8px;top:205.37px;font-size:7.2px;line-height:9.36px;color:#2f3338;">普通</span>
<span class="t" style="left:812px;top:205.37px;font-size:7.2px;line-height:9.36px;color:#2f73e0;">修改</span>
<span class="t" style="left:832.5px;top:205.37px;font-size:7.2px;line-height:9.36px;color:#2f73e0;">删除</span>
<span class="t" style="left:854px;top:205.37px;font-size:7.2px;line-height:9.36px;color:#2f73e0;">更多</span>
<svg style="left:872px;top:208.0px" width="4.4" height="3" viewBox="0 0 6 4"><path d="M0.2 0.2 L5.8 0.2 L3 3.8 Z" fill="#2b5fb8"/></svg>
<span class="t" style="left:166.6px;top:224.13px;font-size:7.8px;line-height:10.14px;color:#2f3338;letter-spacing:-0.066px;">vswitch-storage</span>
<svg style="left:225.4px;top:224.7px" width="9.4" height="8" viewBox="0 0 19 16"><circle cx="5.6" cy="10.6" r="4.6" fill="#1f5fd6"/><circle cx="14.4" cy="4" r="3.4" fill="#1f5fd6"/><path d="M2.6 4.6 A6.5 6.5 0 0 1 9 1.4" fill="none" stroke="#1f5fd6" stroke-width="1.6"/><path d="M10.6 14.4 A6.5 6.5 0 0 0 16 10.2" fill="none" stroke="#1f5fd6" stroke-width="1.6"/></svg>
<span class="t" style="left:250.2px;top:224.2px;width:45.9px;overflow:hidden;font-size:7.4px;line-height:9.6px;color:#2f3338">存储网络 迁移</span>
<span class="t" style="left:298px;top:224.13px;font-size:7.8px;line-height:10.14px;color:#2f3338;letter-spacing:-0.037px;">eth7,eth1</span>
<span class="t" style="left:369.3px;top:223.91px;font-size:8.3px;line-height:10.79px;color:#2f3338;letter-spacing:-0.6px;">VEB</span>
<div class="b" style="left:459.7px;top:227.6px;width:2.8px;height:2.8px;background:#55b07c;border-radius:50%;"></div>
<span class="t" style="left:465px;top:224.37px;font-size:7.2px;line-height:9.36px;color:#4fc385;">活动</span>
<span class="t" style="left:518.8px;top:224.0px;font-size:8.0px;line-height:10.4px;color:#2f3338;letter-spacing:-0.27px;">192.168.11.28</span>
<span class="t" style="left:596.3px;top:224.0px;font-size:8.0px;line-height:10.4px;color:#2f3338;letter-spacing:-0.27px;">255.255.255.0</span>
<span class="t" style="left:751.8px;top:224.37px;font-size:7.2px;line-height:9.36px;color:#2f3338;">普通</span>
<span class="t" style="left:812px;top:224.37px;font-size:7.2px;line-height:9.36px;color:#2f73e0;">修改</span>
<span class="t" style="left:832.5px;top:224.37px;font-size:7.2px;line-height:9.36px;color:#2f73e0;">删除</span>
<span class="t" style="left:854px;top:224.37px;font-size:7.2px;line-height:9.36px;color:#2f73e0;">更多</span>
<svg style="left:872px;top:227.0px" width="4.4" height="3" viewBox="0 0 6 4"><path d="M0.2 0.2 L5.8 0.2 L3 3.8 Z" fill="#2b5fb8"/></svg>
<div class="b" style="left:152.4px;top:238.1px;width:845.4px;height:19.0px;background:#bcd3f8;"></div>
<span class="t" style="left:166.6px;top:243.13px;font-size:7.8px;line-height:10.14px;color:#2f3338;letter-spacing:-0.089px;">vswitch0</span>
<svg style="left:201.4px;top:243.7px" width="9.4" height="8" viewBox="0 0 19 16"><circle cx="5.6" cy="10.6" r="4.6" fill="#1f5fd6"/><circle cx="14.4" cy="4" r="3.4" fill="#1f5fd6"/><path d="M2.6 4.6 A6.5 6.5 0 0 1 9 1.4" fill="none" stroke="#1f5fd6" stroke-width="1.6"/><path d="M10.6 14.4 A6.5 6.5 0 0 0 16 10.2" fill="none" stroke="#1f5fd6" stroke-width="1.6"/></svg>
<span class="t" style="left:250.2px;top:243.2px;width:45.9px;overflow:hidden;font-size:7.4px;line-height:9.6px;color:#2f3338">管理网络 业务</span>
<span class="t" style="left:298px;top:243.13px;font-size:7.8px;line-height:10.14px;color:#2f3338;letter-spacing:-0.037px;">eth3,eth2</span>
<span class="t" style="left:369.3px;top:242.91px;font-size:8.3px;line-height:10.79px;color:#2f3338;letter-spacing:-0.6px;">VEB</span>
<div class="b" style="left:459.7px;top:246.6px;width:2.8px;height:2.8px;background:#55b07c;border-radius:50%;"></div>
<span class="t" style="left:465px;top:243.37px;font-size:7.2px;line-height:9.36px;color:#4fc385;">活动</span>
<span class="t" style="left:518.8px;top:243.0px;font-size:8.0px;line-height:10.4px;color:#2f3338;letter-spacing:-0.27px;">10.13.48.158</span>
<span class="t" style="left:596.3px;top:243.0px;font-size:8.0px;line-height:10.4px;color:#2f3338;letter-spacing:-0.27px;">255.255.255.128</span>
<span class="t" style="left:674px;top:243.0px;font-size:8.0px;line-height:10.4px;color:#2f3338;letter-spacing:-0.27px;">10.13.48.129</span>
<span class="t" style="left:751.8px;top:243.37px;font-size:7.2px;line-height:9.36px;color:#2f3338;">普通</span>
<span class="t" style="left:812px;top:243.37px;font-size:7.2px;line-height:9.36px;color:#2f73e0;">修改</span>
<span class="t" style="left:832.5px;top:243.37px;font-size:7.2px;line-height:9.36px;color:#c3d0e6;">删除</span>
<span class="t" style="left:854px;top:243.37px;font-size:7.2px;line-height:9.36px;color:#2f73e0;">更多</span>
<svg style="left:872px;top:246.0px" width="4.4" height="3" viewBox="0 0 6 4"><path d="M0.2 0.2 L5.8 0.2 L3 3.8 Z" fill="#2b5fb8"/></svg>
<span class="t" style="left:166.6px;top:262.13px;font-size:7.8px;line-height:10.14px;color:#2f3338;letter-spacing:-0.205px;">vswitch01</span>
<svg style="left:204.6px;top:262.7px" width="9.4" height="8" viewBox="0 0 19 16"><circle cx="5.6" cy="10.6" r="4.6" fill="#1f5fd6"/><circle cx="14.4" cy="4" r="3.4" fill="#1f5fd6"/><path d="M2.6 4.6 A6.5 6.5 0 0 1 9 1.4" fill="none" stroke="#1f5fd6" stroke-width="1.6"/><path d="M10.6 14.4 A6.5 6.5 0 0 0 16 10.2" fill="none" stroke="#1f5fd6" stroke-width="1.6"/></svg>
<span class="t" style="left:250.2px;top:262.2px;width:45.9px;overflow:hidden;font-size:7.4px;line-height:9.6px;color:#2f3338">业务网络</span>
<span class="t" style="left:369.3px;top:261.91px;font-size:8.3px;line-height:10.79px;color:#2f3338;letter-spacing:-0.6px;">VEB</span>
<span class="t" style="left:417px;top:262.06px;font-size:7.9px;line-height:10.27px;color:#2f3338;">20</span>
<div class="b" style="left:459.7px;top:265.6px;width:2.8px;height:2.8px;background:#55b07c;border-radius:50%;"></div>
<span class="t" style="left:465px;top:262.37px;font-size:7.2px;line-height:9.36px;color:#4fc385;">活动</span>
<span class="t" style="left:751.8px;top:262.37px;font-size:7.2px;line-height:9.36px;color:#2f3338;">普通</span>
<span class="t" style="left:812px;top:262.37px;font-size:7.2px;line-height:9.36px;color:#2f73e0;">修改</span>
<span class="t" style="left:832.5px;top:262.37px;font-size:7.2px;line-height:9.36px;color:#2f73e0;">删除</span>
<span class="t" style="left:854px;top:262.37px;font-size:7.2px;line-height:9.36px;color:#2f73e0;">更多</span>
<svg style="left:872px;top:265.0px" width="4.4" height="3" viewBox="0 0 6 4"><path d="M0.2 0.2 L5.8 0.2 L3 3.8 Z" fill="#2b5fb8"/></svg>
<div class="b" style="left:997.8px;top:143.1px;width:4.6px;height:134px;background:#f3f3f3;"></div>
<div class="b" style="left:997.8px;top:143.5px;width:4.6px;height:104px;background:#c3c4c6;"></div>
<div class="b" style="left:152.0px;top:143px;width:0.7px;height:140px;background:#f0f2f5;"></div>
<div class="b" style="left:152.4px;top:277.4px;width:850px;height:0.8px;background:#eef0f3;"></div>
<div class="b" style="left:152.4px;top:282.6px;width:850px;height:0.9px;background:#eceef2;"></div>
<span class="t" style="left:781.6px;top:294.3px;font-size:7.7px;line-height:10.01px;color:#5f646c;letter-spacing:0.42px;">第1-9条, 共 9 条</span>
<svg style="left:853.5px;top:296.4px" width="7" height="6" viewBox="0 0 14 12"><path d="M6 1 L1.4 6 L6 11 M12.4 1 L7.8 6 L12.4 11" fill="none" stroke="#b9bdc5" stroke-width="1.4"/></svg>
<svg style="left:867.5px;top:296.4px" width="4" height="6" viewBox="0 0 8 12"><path d="M6.4 1 L1.6 6 L6.4 11" fill="none" stroke="#b9bdc5" stroke-width="1.4"/></svg>
<span class="t" style="left:880px;top:294.07px;font-size:8.2px;line-height:10.66px;color:#3a3e45;">1</span>
<svg style="left:888px;top:297.6px" width="5.4" height="3.6" viewBox="0 0 11 7"><path d="M1 1 L5.5 6 L10 1" fill="none" stroke="#6d727b" stroke-width="1.3"/></svg>
<span class="t" style="left:896.6px;top:294.07px;font-size:8.2px;line-height:10.66px;color:#3a3e45;letter-spacing:0.6px;">/1</span>
<svg style="left:914px;top:296.4px" width="4" height="6" viewBox="0 0 8 12"><path d="M1.6 1 L6.4 6 L1.6 11" fill="none" stroke="#b9bdc5" stroke-width="1.4"/></svg>
<svg style="left:928px;top:296.4px" width="7" height="6" viewBox="0 0 14 12"><path d="M1.6 1 L6.2 6 L1.6 11 M8 1 L12.6 6 L8 11" fill="none" stroke="#b9bdc5" stroke-width="1.4"/></svg>
<div class="b" style="left:940px;top:290.4px;width:51.4px;height:16.7px;background:#ffffff;border:1px solid #e4e6ea;box-sizing:border-box;"></div>
<span class="t" style="left:947px;top:294.17px;font-size:7.9px;line-height:10.27px;color:#2f3338;letter-spacing:0.1px;">10条/页</span>
<svg style="left:981.5px;top:298.4px" width="4.4" height="3" viewBox="0 0 6 4"><path d="M0.2 0.2 L5.8 0.2 L3 3.8 Z" fill="#4a4f57"/></svg>
<div class="b" style="left:1010px;top:64.5px;width:10px;height:480.5px;background:#f8f9fb;"></div>
<div class="b" style="left:1014.8px;top:487.9px;width:5.2px;height:57.1px;background:#f1f1f5;"></div>
<div class="b" style="left:1014.8px;top:99.3px;width:5.2px;height:388.6px;background:#c1c3c6;"></div>
<svg style="left:156px;top:467px" width="665" height="78" viewBox="156 467 665 78" font-family='"Liberation Sans",sans-serif'><rect x="156" y="467" width="665" height="80" fill="#303137"/><rect x="186" y="472.2" width="633" height="75" fill="#efeff0"/><text x="160.1" y="497.9" font-size="3.1" fill="#f4f4f4" text-anchor="start" font-weight="700" >Power</text><rect x="169.6" y="495.3" width="12.6" height="3.1" fill="#f4ee1c"/><text x="160.1" y="503.1" font-size="3.1" fill="#f4f4f4" text-anchor="start" font-weight="700" >Fault</text><rect x="169.6" y="500.5" width="12.6" height="3.1" fill="#f6f6f2"/><text x="160.1" y="508.1" font-size="3.1" fill="#f4f4f4" text-anchor="start" font-weight="700" >Locator</text><circle cx="175.8" cy="507" r="2" fill="#3768cf"/><circle cx="175.8" cy="507" r="1.15" fill="#ffffff"/><rect x="167" y="513.4" width="10.6" height="4.8" fill="#7d7355"/><rect x="168.2" y="514.5" width="8.2" height="2.5" fill="#a39470"/><rect x="167.6" y="525.6" width="9.8" height="1.7" fill="#09090b"/><text x="171.8" y="531.2" font-size="3.5" fill="#e4e4e6" text-anchor="middle" font-weight="700" >Console</text><rect x="242.00" y="480.70" width="7.1" height="5.4" rx="0.8" fill="#08080a"/><text x="245.55" y="484.75" font-size="3.6" fill="#ffffff" text-anchor="middle" font-weight="700" >0</text><path d="M257.75 488.00 V484.30 H270.75 V488.00" fill="none" stroke="#393e50" stroke-width="0.75"/><rect x="260.70" y="480.70" width="7.1" height="5.4" rx="0.8" fill="#08080a"/><text x="264.25" y="484.75" font-size="3.6" fill="#ffffff" text-anchor="middle" font-weight="700" >2</text><path d="M274.55 488.00 V484.30 H287.55 V488.00" fill="none" stroke="#393e50" stroke-width="0.75"/><rect x="277.50" y="480.70" width="7.1" height="5.4" rx="0.8" fill="#08080a"/><text x="281.05" y="484.75" font-size="3.6" fill="#ffffff" text-anchor="middle" font-weight="700" >4</text><path d="M291.35 488.00 V484.30 H304.35 V488.00" fill="none" stroke="#393e50" stroke-width="0.75"/><rect x="294.30" y="480.70" width="7.1" height="5.4" rx="0.8" fill="#08080a"/><text x="297.85" y="484.75" font-size="3.6" fill="#ffffff" text-anchor="middle" font-weight="700" >6</text><path d="M308.15 488.00 V484.30 H321.15 V488.00" fill="none" stroke="#393e50" stroke-width="0.75"/><rect x="311.10" y="480.70" width="7.1" height="5.4" rx="0.8" fill="#08080a"/><text x="314.65" y="484.75" font-size="3.6" fill="#ffffff" text-anchor="middle" font-weight="700" >8</text><path d="M324.95 488.00 V484.30 H337.95 V488.00" fill="none" stroke="#393e50" stroke-width="0.75"/><rect x="327.90" y="480.70" width="7.1" height="5.4" rx="0.8" fill="#08080a"/><text x="331.45" y="484.75" font-size="3.6" fill="#ffffff" text-anchor="middle" font-weight="700" >10</text><path d="M341.75 488.00 V484.30 H354.75 V488.00" fill="none" stroke="#393e50" stroke-width="0.75"/><rect x="344.70" y="480.70" width="7.1" height="5.4" rx="0.8" fill="#08080a"/><text x="348.25" y="484.75" font-size="3.6" fill="#ffffff" text-anchor="middle" font-weight="700" >12</text><path d="M358.55 488.00 V484.30 H371.55 V488.00" fill="none" stroke="#393e50" stroke-width="0.75"/><rect x="361.50" y="480.70" width="7.1" height="5.4" rx="0.8" fill="#08080a"/><text x="365.05" y="484.75" font-size="3.6" fill="#ffffff" text-anchor="middle" font-weight="700" >14</text><text x="235.2" y="484.35" font-size="2.7" fill="#4d515b" text-anchor="start" font-weight="400" >Link</text><text x="249.3" y="484.35" font-size="2.7" fill="#4d515b" text-anchor="start" font-weight="400" >Mode</text><rect x="237.0" y="488" width="137.8" height="34.4" rx="0.8" fill="#ffffff" stroke="#454b5f" stroke-width="0.9"/><g transform="translate(240.1 490.8)"><rect x="0" y="0" width="14.6" height="13.2" fill="#2fc42d"/><rect x="0.8" y="0.8" width="13" height="11.6" fill="#1d9b1c"/><path d="M2.4 6.6 L7.3 2.9 L12.2 6.6 Z" fill="#0f7413"/><rect x="2.2" y="7" width="10.2" height="4.9" fill="#26b024"/><path d="M1.5 6.5 L7.3 1.9 L13.1 6.5" fill="none" stroke="#4ad446" stroke-width="0.9"/><path d="M2 6.9 H12.6" stroke="#0f7413" stroke-width="0.8"/><rect x="4" y="8.2" width="6.6" height="2.6" fill="#4ad446" opacity="0.4"/></g><g transform="translate(240.1 506.1)"><rect x="0" y="0" width="14.6" height="13.2" fill="#2fc42d"/><rect x="0.8" y="0.8" width="13" height="11.6" fill="#1d9b1c"/><path d="M2.4 6.6 L7.3 2.9 L12.2 6.6 Z" fill="#0f7413"/><rect x="2.2" y="7" width="10.2" height="4.9" fill="#26b024"/><path d="M1.5 6.5 L7.3 1.9 L13.1 6.5" fill="none" stroke="#4ad446" stroke-width="0.9"/><path d="M2 6.9 H12.6" stroke="#0f7413" stroke-width="0.8"/><rect x="4" y="8.2" width="6.6" height="2.6" fill="#4ad446" opacity="0.4"/></g><g transform="translate(256.9 490.8)"><rect x="0" y="0" width="14.6" height="13.2" fill="#2fc42d"/><rect x="0.8" y="0.8" width="13" height="11.6" fill="#1d9b1c"/><path d="M2.4 6.6 L7.3 2.9 L12.2 6.6 Z" fill="#0f7413"/><rect x="2.2" y="7" width="10.2" height="4.9" fill="#26b024"/><path d="M1.5 6.5 L7.3 1.9 L13.1 6.5" fill="none" stroke="#4ad446" stroke-width="0.9"/><path d="M2 6.9 H12.6" stroke="#0f7413" stroke-width="0.8"/><rect x="4" y="8.2" width="6.6" height="2.6" fill="#4ad446" opacity="0.4"/></g><g transform="translate(256.9 506.1)"><rect x="0" y="0" width="14.6" height="13.2" fill="#2fc42d"/><rect x="0.8" y="0.8" width="13" height="11.6" fill="#1d9b1c"/><path d="M2.4 6.6 L7.3 2.9 L12.2 6.6 Z" fill="#0f7413"/><rect x="2.2" y="7" width="10.2" height="4.9" fill="#26b024"/><path d="M1.5 6.5 L7.3 1.9 L13.1 6.5" fill="none" stroke="#4ad446" stroke-width="0.9"/><path d="M2 6.9 H12.6" stroke="#0f7413" stroke-width="0.8"/><rect x="4" y="8.2" width="6.6" height="2.6" fill="#4ad446" opacity="0.4"/></g><g transform="translate(273.7 490.8)"><rect x="0" y="0" width="14.6" height="13.2" fill="#4d4d52"/><rect x="0.8" y="0.8" width="13" height="11.6" fill="#46464a"/><path d="M2.4 6.6 L7.3 2.9 L12.2 6.6 Z" fill="#38383c"/><rect x="2.2" y="7" width="10.2" height="4.9" fill="#5d5d63"/><path d="M1.5 6.5 L7.3 1.9 L13.1 6.5" fill="none" stroke="#707077" stroke-width="0.9"/><path d="M2 6.9 H12.6" stroke="#38383c" stroke-width="0.8"/><path d="M4.2 7.1V11.9M6.2 7.1V11.9M8.2 7.1V11.9M10.2 7.1V11.9M2.2 8.7H12.4M2.2 10.3H12.4" stroke="#46464a" stroke-width="0.4"/></g><g transform="translate(273.7 506.1)"><rect x="0" y="0" width="14.6" height="13.2" fill="#4d4d52"/><rect x="0.8" y="0.8" width="13" height="11.6" fill="#46464a"/><path d="M2.4 6.6 L7.3 2.9 L12.2 6.6 Z" fill="#38383c"/><rect x="2.2" y="7" width="10.2" height="4.9" fill="#5d5d63"/><path d="M1.5 6.5 L7.3 1.9 L13.1 6.5" fill="none" stroke="#707077" stroke-width="0.9"/><path d="M2 6.9 H12.6" stroke="#38383c" stroke-width="0.8"/><path d="M4.2 7.1V11.9M6.2 7.1V11.9M8.2 7.1V11.9M10.2 7.1V11.9M2.2 8.7H12.4M2.2 10.3H12.4" stroke="#46464a" stroke-width="0.4"/></g><g transform="translate(290.5 490.8)"><rect x="0" y="0" width="14.6" height="13.2" fill="#2fc42d"/><rect x="0.8" y="0.8" width="13" height="11.6" fill="#1d9b1c"/><path d="M2.4 6.6 L7.3 2.9 L12.2 6.6 Z" fill="#0f7413"/><rect x="2.2" y="7" width="10.2" height="4.9" fill="#26b024"/><path d="M1.5 6.5 L7.3 1.9 L13.1 6.5" fill="none" stroke="#4ad446" stroke-width="0.9"/><path d="M2 6.9 H12.6" stroke="#0f7413" stroke-width="0.8"/><rect x="4" y="8.2" width="6.6" height="2.6" fill="#4ad446" opacity="0.4"/></g><g transform="translate(290.5 506.1)"><rect x="0" y="0" width="14.6" height="13.2" fill="#2fc42d"/><rect x="0.8" y="0.8" width="13" height="11.6" fill="#1d9b1c"/><path d="M2.4 6.6 L7.3 2.9 L12.2 6.6 Z" fill="#0f7413"/><rect x="2.2" y="7" width="10.2" height="4.9" fill="#26b024"/><path d="M1.5 6.5 L7.3 1.9 L13.1 6.5" fill="none" stroke="#4ad446" stroke-width="0.9"/><path d="M2 6.9 H12.6" stroke="#0f7413" stroke-width="0.8"/><rect x="4" y="8.2" width="6.6" height="2.6" fill="#4ad446" opacity="0.4"/></g><g transform="translate(307.3 490.8)"><rect x="0" y="0" width="14.6" height="13.2" fill="#4d4d52"/><rect x="0.8" y="0.8" width="13" height="11.6" fill="#46464a"/><path d="M2.4 6.6 L7.3 2.9 L12.2 6.6 Z" fill="#38383c"/><rect x="2.2" y="7" width="10.2" height="4.9" fill="#5d5d63"/><path d="M1.5 6.5 L7.3 1.9 L13.1 6.5" fill="none" stroke="#707077" stroke-width="0.9"/><path d="M2 6.9 H12.6" stroke="#38383c" stroke-width="0.8"/><path d="M4.2 7.1V11.9M6.2 7.1V11.9M8.2 7.1V11.9M10.2 7.1V11.9M2.2 8.7H12.4M2.2 10.3H12.4" stroke="#46464a" stroke-width="0.4"/></g><g transform="translate(307.3 506.1)"><rect x="0" y="0" width="14.6" height="13.2" fill="#2fc42d"/><rect x="0.8" y="0.8" width="13" height="11.6" fill="#1d9b1c"/><path d="M2.4 6.6 L7.3 2.9 L12.2 6.6 Z" fill="#0f7413"/><rect x="2.2" y="7" width="10.2" height="4.9" fill="#26b024"/><path d="M1.5 6.5 L7.3 1.9 L13.1 6.5" fill="none" stroke="#4ad446" stroke-width="0.9"/><path d="M2 6.9 H12.6" stroke="#0f7413" stroke-width="0.8"/><rect x="4" y="8.2" width="6.6" height="2.6" fill="#4ad446" opacity="0.4"/></g><g transform="translate(324.1 490.8)"><rect x="0" y="0" width="14.6" height="13.2" fill="#2fc42d"/><rect x="0.8" y="0.8" width="13" height="11.6" fill="#1d9b1c"/><path d="M2.4 6.6 L7.3 2.9 L12.2 6.6 Z" fill="#0f7413"/><rect x="2.2" y="7" width="10.2" height="4.9" fill="#26b024"/><path d="M1.5 6.5 L7.3 1.9 L13.1 6.5" fill="none" stroke="#4ad446" stroke-width="0.9"/><path d="M2 6.9 H12.6" stroke="#0f7413" stroke-width="0.8"/><rect x="4" y="8.2" width="6.6" height="2.6" fill="#4ad446" opacity="0.4"/></g><g transform="translate(324.1 506.1)"><rect x="0" y="0" width="14.6" height="13.2" fill="#57495c"/><rect x="0.8" y="0.8" width="13" height="11.6" fill="#4a424f"/><path d="M2.4 6.6 L7.3 2.9 L12.2 6.6 Z" fill="#3b343f"/><rect x="2.2" y="7" width="10.2" height="4.9" fill="#62586a"/><path d="M1.5 6.5 L7.3 1.9 L13.1 6.5" fill="none" stroke="#776c7d" stroke-width="0.9"/><path d="M2 6.9 H12.6" stroke="#3b343f" stroke-width="0.8"/><path d="M4.2 7.1V11.9M6.2 7.1V11.9M8.2 7.1V11.9M10.2 7.1V11.9M2.2 8.7H12.4M2.2 10.3H12.4" stroke="#4a424f" stroke-width="0.4"/></g><g transform="translate(340.9 490.8)"><rect x="0" y="0" width="14.6" height="13.2" fill="#2fc42d"/><rect x="0.8" y="0.8" width="13" height="11.6" fill="#1d9b1c"/><path d="M2.4 6.6 L7.3 2.9 L12.2 6.6 Z" fill="#0f7413"/><rect x="2.2" y="7" width="10.2" height="4.9" fill="#26b024"/><path d="M1.5 6.5 L7.3 1.9 L13.1 6.5" fill="none" stroke="#4ad446" stroke-width="0.9"/><path d="M2 6.9 H12.6" stroke="#0f7413" stroke-width="0.8"/><rect x="4" y="8.2" width="6.6" height="2.6" fill="#4ad446" opacity="0.4"/></g><g transform="translate(340.9 506.1)"><rect x="0" y="0" width="14.6" height="13.2" fill="#2fc42d"/><rect x="0.8" y="0.8" width="13" height="11.6" fill="#1d9b1c"/><path d="M2.4 6.6 L7.3 2.9 L12.2 6.6 Z" fill="#0f7413"/><rect x="2.2" y="7" width="10.2" height="4.9" fill="#26b024"/><path d="M1.5 6.5 L7.3 1.9 L13.1 6.5" fill="none" stroke="#4ad446" stroke-width="0.9"/><path d="M2 6.9 H12.6" stroke="#0f7413" stroke-width="0.8"/><rect x="4" y="8.2" width="6.6" height="2.6" fill="#4ad446" opacity="0.4"/></g><g transform="translate(357.7 490.8)"><rect x="0" y="0" width="14.6" height="13.2" fill="#2fc42d"/><rect x="0.8" y="0.8" width="13" height="11.6" fill="#1d9b1c"/><path d="M2.4 6.6 L7.3 2.9 L12.2 6.6 Z" fill="#0f7413"/><rect x="2.2" y="7" width="10.2" height="4.9" fill="#26b024"/><path d="M1.5 6.5 L7.3 1.9 L13.1 6.5" fill="none" stroke="#4ad446" stroke-width="0.9"/><path d="M2 6.9 H12.6" stroke="#0f7413" stroke-width="0.8"/><rect x="4" y="8.2" width="6.6" height="2.6" fill="#4ad446" opacity="0.4"/></g><g transform="translate(357.7 506.1)"><rect x="0" y="0" width="14.6" height="13.2" fill="#2fc42d"/><rect x="0.8" y="0.8" width="13" height="11.6" fill="#1d9b1c"/><path d="M2.4 6.6 L7.3 2.9 L12.2 6.6 Z" fill="#0f7413"/><rect x="2.2" y="7" width="10.2" height="4.9" fill="#26b024"/><path d="M1.5 6.5 L7.3 1.9 L13.1 6.5" fill="none" stroke="#4ad446" stroke-width="0.9"/><path d="M2 6.9 H12.6" stroke="#0f7413" stroke-width="0.8"/><rect x="4" y="8.2" width="6.6" height="2.6" fill="#4ad446" opacity="0.4"/></g><rect x="242.00" y="523.70" width="7.1" height="5.4" rx="0.8" fill="#08080a"/><text x="245.55" y="527.75" font-size="3.6" fill="#ffffff" text-anchor="middle" font-weight="700" >1</text><path d="M257.75 522.20 V525.50 H270.75 V522.20" fill="none" stroke="#393e50" stroke-width="0.75"/><rect x="260.70" y="523.70" width="7.1" height="5.4" rx="0.8" fill="#08080a"/><text x="264.25" y="527.75" font-size="3.6" fill="#ffffff" text-anchor="middle" font-weight="700" >3</text><path d="M274.55 522.20 V525.50 H287.55 V522.20" fill="none" stroke="#393e50" stroke-width="0.75"/><rect x="277.50" y="523.70" width="7.1" height="5.4" rx="0.8" fill="#08080a"/><text x="281.05" y="527.75" font-size="3.6" fill="#ffffff" text-anchor="middle" font-weight="700" >5</text><path d="M291.35 522.20 V525.50 H304.35 V522.20" fill="none" stroke="#393e50" stroke-width="0.75"/><rect x="294.30" y="523.70" width="7.1" height="5.4" rx="0.8" fill="#08080a"/><text x="297.85" y="527.75" font-size="3.6" fill="#ffffff" text-anchor="middle" font-weight="700" >7</text><path d="M308.15 522.20 V525.50 H321.15 V522.20" fill="none" stroke="#393e50" stroke-width="0.75"/><rect x="311.10" y="523.70" width="7.1" height="5.4" rx="0.8" fill="#08080a"/><text x="314.65" y="527.75" font-size="3.6" fill="#ffffff" text-anchor="middle" font-weight="700" >9</text><path d="M324.95 522.20 V525.50 H337.95 V522.20" fill="none" stroke="#393e50" stroke-width="0.75"/><rect x="327.90" y="523.70" width="7.1" height="5.4" rx="0.8" fill="#08080a"/><text x="331.45" y="527.75" font-size="3.6" fill="#ffffff" text-anchor="middle" font-weight="700" >11</text><path d="M341.75 522.20 V525.50 H354.75 V522.20" fill="none" stroke="#393e50" stroke-width="0.75"/><rect x="344.70" y="523.70" width="7.1" height="5.4" rx="0.8" fill="#08080a"/><text x="348.25" y="527.75" font-size="3.6" fill="#ffffff" text-anchor="middle" font-weight="700" >13</text><path d="M358.55 522.20 V525.50 H371.55 V522.20" fill="none" stroke="#393e50" stroke-width="0.75"/><rect x="361.50" y="523.70" width="7.1" height="5.4" rx="0.8" fill="#08080a"/><text x="365.05" y="527.75" font-size="3.6" fill="#ffffff" text-anchor="middle" font-weight="700" >15</text><text x="235.2" y="527.35" font-size="2.7" fill="#4d515b" text-anchor="start" font-weight="400" >Link</text><text x="249.3" y="527.35" font-size="2.7" fill="#4d515b" text-anchor="start" font-weight="400" >Mode</text><rect x="242.00" y="535.70" width="7.1" height="5.4" rx="0.8" fill="#08080a"/><text x="245.55" y="539.75" font-size="3.6" fill="#ffffff" text-anchor="middle" font-weight="700" >64</text><path d="M257.75 543.00 V539.30 H270.75 V543.00" fill="none" stroke="#393e50" stroke-width="0.75"/><rect x="260.70" y="535.70" width="7.1" height="5.4" rx="0.8" fill="#08080a"/><text x="264.25" y="539.75" font-size="3.6" fill="#ffffff" text-anchor="middle" font-weight="700" >66</text><path d="M274.55 543.00 V539.30 H287.55 V543.00" fill="none" stroke="#393e50" stroke-width="0.75"/><rect x="277.50" y="535.70" width="7.1" height="5.4" rx="0.8" fill="#08080a"/><text x="281.05" y="539.75" font-size="3.6" fill="#ffffff" text-anchor="middle" font-weight="700" >68</text><path d="M291.35 543.00 V539.30 H304.35 V543.00" fill="none" stroke="#393e50" stroke-width="0.75"/><rect x="294.30" y="535.70" width="7.1" height="5.4" rx="0.8" fill="#08080a"/><text x="297.85" y="539.75" font-size="3.6" fill="#ffffff" text-anchor="middle" font-weight="700" >70</text><path d="M308.15 543.00 V539.30 H321.15 V543.00" fill="none" stroke="#393e50" stroke-width="0.75"/><rect x="311.10" y="535.70" width="7.1" height="5.4" rx="0.8" fill="#08080a"/><text x="314.65" y="539.75" font-size="3.6" fill="#ffffff" text-anchor="middle" font-weight="700" >72</text><path d="M324.95 543.00 V539.30 H337.95 V543.00" fill="none" stroke="#393e50" stroke-width="0.75"/><rect x="327.90" y="535.70" width="7.1" height="5.4" rx="0.8" fill="#08080a"/><text x="331.45" y="539.75" font-size="3.6" fill="#ffffff" text-anchor="middle" font-weight="700" >74</text><path d="M341.75 543.00 V539.30 H354.75 V543.00" fill="none" stroke="#393e50" stroke-width="0.75"/><rect x="344.70" y="535.70" width="7.1" height="5.4" rx="0.8" fill="#08080a"/><text x="348.25" y="539.75" font-size="3.6" fill="#ffffff" text-anchor="middle" font-weight="700" >76</text><path d="M358.55 543.00 V539.30 H371.55 V543.00" fill="none" stroke="#393e50" stroke-width="0.75"/><rect x="361.50" y="535.70" width="7.1" height="5.4" rx="0.8" fill="#08080a"/><text x="365.05" y="539.75" font-size="3.6" fill="#ffffff" text-anchor="middle" font-weight="700" >78</text><text x="235.2" y="539.35" font-size="2.7" fill="#4d515b" text-anchor="start" font-weight="400" >Link</text><text x="249.3" y="539.35" font-size="2.7" fill="#4d515b" text-anchor="start" font-weight="400" >Mode</text><rect x="237.0" y="543.2" width="137.8" height="10" rx="0.8" fill="#ffffff" stroke="#454b5f" stroke-width="0.9"/><rect x="385.70" y="480.70" width="7.1" height="5.4" rx="0.8" fill="#08080a"/><text x="389.25" y="484.75" font-size="3.6" fill="#ffffff" text-anchor="middle" font-weight="700" >16</text><path d="M401.45 488.00 V484.30 H414.45 V488.00" fill="none" stroke="#393e50" stroke-width="0.75"/><rect x="404.40" y="480.70" width="7.1" height="5.4" rx="0.8" fill="#08080a"/><text x="407.95" y="484.75" font-size="3.6" fill="#ffffff" text-anchor="middle" font-weight="700" >18</text><path d="M418.25 488.00 V484.30 H431.25 V488.00" fill="none" stroke="#393e50" stroke-width="0.75"/><rect x="421.20" y="480.70" width="7.1" height="5.4" rx="0.8" fill="#08080a"/><text x="424.75" y="484.75" font-size="3.6" fill="#ffffff" text-anchor="middle" font-weight="700" >20</text><path d="M435.05 488.00 V484.30 H448.05 V488.00" fill="none" stroke="#393e50" stroke-width="0.75"/><rect x="438.00" y="480.70" width="7.1" height="5.4" rx="0.8" fill="#08080a"/><text x="441.55" y="484.75" font-size="3.6" fill="#ffffff" text-anchor="middle" font-weight="700" >22</text><path d="M451.85 488.00 V484.30 H464.85 V488.00" fill="none" stroke="#393e50" stroke-width="0.75"/><rect x="454.80" y="480.70" width="7.1" height="5.4" rx="0.8" fill="#08080a"/><text x="458.35" y="484.75" font-size="3.6" fill="#ffffff" text-anchor="middle" font-weight="700" >24</text><path d="M468.65 488.00 V484.30 H481.65 V488.00" fill="none" stroke="#393e50" stroke-width="0.75"/><rect x="471.60" y="480.70" width="7.1" height="5.4" rx="0.8" fill="#08080a"/><text x="475.15" y="484.75" font-size="3.6" fill="#ffffff" text-anchor="middle" font-weight="700" >26</text><path d="M485.45 488.00 V484.30 H498.45 V488.00" fill="none" stroke="#393e50" stroke-width="0.75"/><rect x="488.40" y="480.70" width="7.1" height="5.4" rx="0.8" fill="#08080a"/><text x="491.95" y="484.75" font-size="3.6" fill="#ffffff" text-anchor="middle" font-weight="700" >28</text><path d="M502.25 488.00 V484.30 H515.25 V488.00" fill="none" stroke="#393e50" stroke-width="0.75"/><rect x="505.20" y="480.70" width="7.1" height="5.4" rx="0.8" fill="#08080a"/><text x="508.75" y="484.75" font-size="3.6" fill="#ffffff" text-anchor="middle" font-weight="700" >30</text><text x="378.9" y="484.35" font-size="2.7" fill="#4d515b" text-anchor="start" font-weight="400" >Link</text><text x="393.0" y="484.35" font-size="2.7" fill="#4d515b" text-anchor="start" font-weight="400" >Mode</text><rect x="380.7" y="488" width="137.8" height="34.4" rx="0.8" fill="#ffffff" stroke="#454b5f" stroke-width="0.9"/><g transform="translate(383.8 490.8)"><rect x="0" y="0" width="14.6" height="13.2" fill="#4d4d52"/><rect x="0.8" y="0.8" width="13" height="11.6" fill="#46464a"/><path d="M2.4 6.6 L7.3 2.9 L12.2 6.6 Z" fill="#38383c"/><rect x="2.2" y="7" width="10.2" height="4.9" fill="#5d5d63"/><path d="M1.5 6.5 L7.3 1.9 L13.1 6.5" fill="none" stroke="#707077" stroke-width="0.9"/><path d="M2 6.9 H12.6" stroke="#38383c" stroke-width="0.8"/><path d="M4.2 7.1V11.9M6.2 7.1V11.9M8.2 7.1V11.9M10.2 7.1V11.9M2.2 8.7H12.4M2.2 10.3H12.4" stroke="#46464a" stroke-width="0.4"/></g><g transform="translate(383.8 506.1)"><rect x="0" y="0" width="14.6" height="13.2" fill="#4d4d52"/><rect x="0.8" y="0.8" width="13" height="11.6" fill="#46464a"/><path d="M2.4 6.6 L7.3 2.9 L12.2 6.6 Z" fill="#38383c"/><rect x="2.2" y="7" width="10.2" height="4.9" fill="#5d5d63"/><path d="M1.5 6.5 L7.3 1.9 L13.1 6.5" fill="none" stroke="#707077" stroke-width="0.9"/><path d="M2 6.9 H12.6" stroke="#38383c" stroke-width="0.8"/><path d="M4.2 7.1V11.9M6.2 7.1V11.9M8.2 7.1V11.9M10.2 7.1V11.9M2.2 8.7H12.4M2.2 10.3H12.4" stroke="#46464a" stroke-width="0.4"/></g><g transform="translate(400.6 490.8)"><rect x="0" y="0" width="14.6" height="13.2" fill="#2fc42d"/><rect x="0.8" y="0.8" width="13" height="11.6" fill="#1d9b1c"/><path d="M2.4 6.6 L7.3 2.9 L12.2 6.6 Z" fill="#0f7413"/><rect x="2.2" y="7" width="10.2" height="4.9" fill="#26b024"/><path d="M1.5 6.5 L7.3 1.9 L13.1 6.5" fill="none" stroke="#4ad446" stroke-width="0.9"/><path d="M2 6.9 H12.6" stroke="#0f7413" stroke-width="0.8"/><rect x="4" y="8.2" width="6.6" height="2.6" fill="#4ad446" opacity="0.4"/></g><g transform="translate(400.6 506.1)"><rect x="0" y="0" width="14.6" height="13.2" fill="#4d4d52"/><rect x="0.8" y="0.8" width="13" height="11.6" fill="#46464a"/><path d="M2.4 6.6 L7.3 2.9 L12.2 6.6 Z" fill="#38383c"/><rect x="2.2" y="7" width="10.2" height="4.9" fill="#5d5d63"/><path d="M1.5 6.5 L7.3 1.9 L13.1 6.5" fill="none" stroke="#707077" stroke-width="0.9"/><path d="M2 6.9 H12.6" stroke="#38383c" stroke-width="0.8"/><path d="M4.2 7.1V11.9M6.2 7.1V11.9M8.2 7.1V11.9M10.2 7.1V11.9M2.2 8.7H12.4M2.2 10.3H12.4" stroke="#46464a" stroke-width="0.4"/></g><g transform="translate(417.4 490.8)"><rect x="0" y="0" width="14.6" height="13.2" fill="#4d4d52"/><rect x="0.8" y="0.8" width="13" height="11.6" fill="#46464a"/><path d="M2.4 6.6 L7.3 2.9 L12.2 6.6 Z" fill="#38383c"/><rect x="2.2" y="7" width="10.2" height="4.9" fill="#5d5d63"/><path d="M1.5 6.5 L7.3 1.9 L13.1 6.5" fill="none" stroke="#707077" stroke-width="0.9"/><path d="M2 6.9 H12.6" stroke="#38383c" stroke-width="0.8"/><path d="M4.2 7.1V11.9M6.2 7.1V11.9M8.2 7.1V11.9M10.2 7.1V11.9M2.2 8.7H12.4M2.2 10.3H12.4" stroke="#46464a" stroke-width="0.4"/></g><g transform="translate(417.4 506.1)"><rect x="0" y="0" width="14.6" height="13.2" fill="#2fc42d"/><rect x="0.8" y="0.8" width="13" height="11.6" fill="#1d9b1c"/><path d="M2.4 6.6 L7.3 2.9 L12.2 6.6 Z" fill="#0f7413"/><rect x="2.2" y="7" width="10.2" height="4.9" fill="#26b024"/><path d="M1.5 6.5 L7.3 1.9 L13.1 6.5" fill="none" stroke="#4ad446" stroke-width="0.9"/><path d="M2 6.9 H12.6" stroke="#0f7413" stroke-width="0.8"/><rect x="4" y="8.2" width="6.6" height="2.6" fill="#4ad446" opacity="0.4"/></g><g transform="translate(434.2 490.8)"><rect x="0" y="0" width="14.6" height="13.2" fill="#2fc42d"/><rect x="0.8" y="0.8" width="13" height="11.6" fill="#1d9b1c"/><path d="M2.4 6.6 L7.3 2.9 L12.2 6.6 Z" fill="#0f7413"/><rect x="2.2" y="7" width="10.2" height="4.9" fill="#26b024"/><path d="M1.5 6.5 L7.3 1.9 L13.1 6.5" fill="none" stroke="#4ad446" stroke-width="0.9"/><path d="M2 6.9 H12.6" stroke="#0f7413" stroke-width="0.8"/><rect x="4" y="8.2" width="6.6" height="2.6" fill="#4ad446" opacity="0.4"/></g><g transform="translate(434.2 506.1)"><rect x="0" y="0" width="14.6" height="13.2" fill="#2fc42d"/><rect x="0.8" y="0.8" width="13" height="11.6" fill="#1d9b1c"/><path d="M2.4 6.6 L7.3 2.9 L12.2 6.6 Z" fill="#0f7413"/><rect x="2.2" y="7" width="10.2" height="4.9" fill="#26b024"/><path d="M1.5 6.5 L7.3 1.9 L13.1 6.5" fill="none" stroke="#4ad446" stroke-width="0.9"/><path d="M2 6.9 H12.6" stroke="#0f7413" stroke-width="0.8"/><rect x="4" y="8.2" width="6.6" height="2.6" fill="#4ad446" opacity="0.4"/></g><g transform="translate(451.0 490.8)"><rect x="0" y="0" width="14.6" height="13.2" fill="#2fc42d"/><rect x="0.8" y="0.8" width="13" height="11.6" fill="#1d9b1c"/><path d="M2.4 6.6 L7.3 2.9 L12.2 6.6 Z" fill="#0f7413"/><rect x="2.2" y="7" width="10.2" height="4.9" fill="#26b024"/><path d="M1.5 6.5 L7.3 1.9 L13.1 6.5" fill="none" stroke="#4ad446" stroke-width="0.9"/><path d="M2 6.9 H12.6" stroke="#0f7413" stroke-width="0.8"/><rect x="4" y="8.2" width="6.6" height="2.6" fill="#4ad446" opacity="0.4"/></g><g transform="translate(451.0 506.1)"><rect x="0" y="0" width="14.6" height="13.2" fill="#2fc42d"/><rect x="0.8" y="0.8" width="13" height="11.6" fill="#1d9b1c"/><path d="M2.4 6.6 L7.3 2.9 L12.2 6.6 Z" fill="#0f7413"/><rect x="2.2" y="7" width="10.2" height="4.9" fill="#26b024"/><path d="M1.5 6.5 L7.3 1.9 L13.1 6.5" fill="none" stroke="#4ad446" stroke-width="0.9"/><path d="M2 6.9 H12.6" stroke="#0f7413" stroke-width="0.8"/><rect x="4" y="8.2" width="6.6" height="2.6" fill="#4ad446" opacity="0.4"/></g><g transform="translate(467.8 490.8)"><rect x="0" y="0" width="14.6" height="13.2" fill="#2fc42d"/><rect x="0.8" y="0.8" width="13" height="11.6" fill="#1d9b1c"/><path d="M2.4 6.6 L7.3 2.9 L12.2 6.6 Z" fill="#0f7413"/><rect x="2.2" y="7" width="10.2" height="4.9" fill="#26b024"/><path d="M1.5 6.5 L7.3 1.9 L13.1 6.5" fill="none" stroke="#4ad446" stroke-width="0.9"/><path d="M2 6.9 H12.6" stroke="#0f7413" stroke-width="0.8"/><rect x="4" y="8.2" width="6.6" height="2.6" fill="#4ad446" opacity="0.4"/></g><g transform="translate(467.8 506.1)"><rect x="0" y="0" width="14.6" height="13.2" fill="#2fc42d"/><rect x="0.8" y="0.8" width="13" height="11.6" fill="#1d9b1c"/><path d="M2.4 6.6 L7.3 2.9 L12.2 6.6 Z" fill="#0f7413"/><rect x="2.2" y="7" width="10.2" height="4.9" fill="#26b024"/><path d="M1.5 6.5 L7.3 1.9 L13.1 6.5" fill="none" stroke="#4ad446" stroke-width="0.9"/><path d="M2 6.9 H12.6" stroke="#0f7413" stroke-width="0.8"/><rect x="4" y="8.2" width="6.6" height="2.6" fill="#4ad446" opacity="0.4"/></g><g transform="translate(484.6 490.8)"><rect x="0" y="0" width="14.6" height="13.2" fill="#2fc42d"/><rect x="0.8" y="0.8" width="13" height="11.6" fill="#1d9b1c"/><path d="M2.4 6.6 L7.3 2.9 L12.2 6.6 Z" fill="#0f7413"/><rect x="2.2" y="7" width="10.2" height="4.9" fill="#26b024"/><path d="M1.5 6.5 L7.3 1.9 L13.1 6.5" fill="none" stroke="#4ad446" stroke-width="0.9"/><path d="M2 6.9 H12.6" stroke="#0f7413" stroke-width="0.8"/><rect x="4" y="8.2" width="6.6" height="2.6" fill="#4ad446" opacity="0.4"/></g><g transform="translate(484.6 506.1)"><rect x="0" y="0" width="14.6" height="13.2" fill="#2fc42d"/><rect x="0.8" y="0.8" width="13" height="11.6" fill="#1d9b1c"/><path d="M2.4 6.6 L7.3 2.9 L12.2 6.6 Z" fill="#0f7413"/><rect x="2.2" y="7" width="10.2" height="4.9" fill="#26b024"/><path d="M1.5 6.5 L7.3 1.9 L13.1 6.5" fill="none" stroke="#4ad446" stroke-width="0.9"/><path d="M2 6.9 H12.6" stroke="#0f7413" stroke-width="0.8"/><rect x="4" y="8.2" width="6.6" height="2.6" fill="#4ad446" opacity="0.4"/></g><g transform="translate(501.4 490.8)"><rect x="0" y="0" width="14.6" height="13.2" fill="#2fc42d"/><rect x="0.8" y="0.8" width="13" height="11.6" fill="#1d9b1c"/><path d="M2.4 6.6 L7.3 2.9 L12.2 6.6 Z" fill="#0f7413"/><rect x="2.2" y="7" width="10.2" height="4.9" fill="#26b024"/><path d="M1.5 6.5 L7.3 1.9 L13.1 6.5" fill="none" stroke="#4ad446" stroke-width="0.9"/><path d="M2 6.9 H12.6" stroke="#0f7413" stroke-width="0.8"/><rect x="4" y="8.2" width="6.6" height="2.6" fill="#4ad446" opacity="0.4"/></g><g transform="translate(501.4 506.1)"><rect x="0" y="0" width="14.6" height="13.2" fill="#2fc42d"/><rect x="0.8" y="0.8" width="13" height="11.6" fill="#1d9b1c"/><path d="M2.4 6.6 L7.3 2.9 L12.2 6.6 Z" fill="#0f7413"/><rect x="2.2" y="7" width="10.2" height="4.9" fill="#26b024"/><path d="M1.5 6.5 L7.3 1.9 L13.1 6.5" fill="none" stroke="#4ad446" stroke-width="0.9"/><path d="M2 6.9 H12.6" stroke="#0f7413" stroke-width="0.8"/><rect x="4" y="8.2" width="6.6" height="2.6" fill="#4ad446" opacity="0.4"/></g><rect x="385.70" y="523.70" width="7.1" height="5.4" rx="0.8" fill="#08080a"/><text x="389.25" y="527.75" font-size="3.6" fill="#ffffff" text-anchor="middle" font-weight="700" >17</text><path d="M401.45 522.20 V525.50 H414.45 V522.20" fill="none" stroke="#393e50" stroke-width="0.75"/><rect x="404.40" y="523.70" width="7.1" height="5.4" rx="0.8" fill="#08080a"/><text x="407.95" y="527.75" font-size="3.6" fill="#ffffff" text-anchor="middle" font-weight="700" >19</text><path d="M418.25 522.20 V525.50 H431.25 V522.20" fill="none" stroke="#393e50" stroke-width="0.75"/><rect x="421.20" y="523.70" width="7.1" height="5.4" rx="0.8" fill="#08080a"/><text x="424.75" y="527.75" font-size="3.6" fill="#ffffff" text-anchor="middle" font-weight="700" >21</text><path d="M435.05 522.20 V525.50 H448.05 V522.20" fill="none" stroke="#393e50" stroke-width="0.75"/><rect x="438.00" y="523.70" width="7.1" height="5.4" rx="0.8" fill="#08080a"/><text x="441.55" y="527.75" font-size="3.6" fill="#ffffff" text-anchor="middle" font-weight="700" >23</text><path d="M451.85 522.20 V525.50 H464.85 V522.20" fill="none" stroke="#393e50" stroke-width="0.75"/><rect x="454.80" y="523.70" width="7.1" height="5.4" rx="0.8" fill="#08080a"/><text x="458.35" y="527.75" font-size="3.6" fill="#ffffff" text-anchor="middle" font-weight="700" >25</text><path d="M468.65 522.20 V525.50 H481.65 V522.20" fill="none" stroke="#393e50" stroke-width="0.75"/><rect x="471.60" y="523.70" width="7.1" height="5.4" rx="0.8" fill="#08080a"/><text x="475.15" y="527.75" font-size="3.6" fill="#ffffff" text-anchor="middle" font-weight="700" >27</text><path d="M485.45 522.20 V525.50 H498.45 V522.20" fill="none" stroke="#393e50" stroke-width="0.75"/><rect x="488.40" y="523.70" width="7.1" height="5.4" rx="0.8" fill="#08080a"/><text x="491.95" y="527.75" font-size="3.6" fill="#ffffff" text-anchor="middle" font-weight="700" >29</text><path d="M502.25 522.20 V525.50 H515.25 V522.20" fill="none" stroke="#393e50" stroke-width="0.75"/><rect x="505.20" y="523.70" width="7.1" height="5.4" rx="0.8" fill="#08080a"/><text x="508.75" y="527.75" font-size="3.6" fill="#ffffff" text-anchor="middle" font-weight="700" >31</text><text x="378.9" y="527.35" font-size="2.7" fill="#4d515b" text-anchor="start" font-weight="400" >Link</text><text x="393.0" y="527.35" font-size="2.7" fill="#4d515b" text-anchor="start" font-weight="400" >Mode</text><rect x="385.70" y="535.70" width="7.1" height="5.4" rx="0.8" fill="#08080a"/><text x="389.25" y="539.75" font-size="3.6" fill="#ffffff" text-anchor="middle" font-weight="700" >80</text><path d="M401.45 543.00 V539.30 H414.45 V543.00" fill="none" stroke="#393e50" stroke-width="0.75"/><rect x="404.40" y="535.70" width="7.1" height="5.4" rx="0.8" fill="#08080a"/><text x="407.95" y="539.75" font-size="3.6" fill="#ffffff" text-anchor="middle" font-weight="700" >82</text><path d="M418.25 543.00 V539.30 H431.25 V543.00" fill="none" stroke="#393e50" stroke-width="0.75"/><rect x="421.20" y="535.70" width="7.1" height="5.4" rx="0.8" fill="#08080a"/><text x="424.75" y="539.75" font-size="3.6" fill="#ffffff" text-anchor="middle" font-weight="700" >84</text><path d="M435.05 543.00 V539.30 H448.05 V543.00" fill="none" stroke="#393e50" stroke-width="0.75"/><rect x="438.00" y="535.70" width="7.1" height="5.4" rx="0.8" fill="#08080a"/><text x="441.55" y="539.75" font-size="3.6" fill="#ffffff" text-anchor="middle" font-weight="700" >86</text><path d="M451.85 543.00 V539.30 H464.85 V543.00" fill="none" stroke="#393e50" stroke-width="0.75"/><rect x="454.80" y="535.70" width="7.1" height="5.4" rx="0.8" fill="#08080a"/><text x="458.35" y="539.75" font-size="3.6" fill="#ffffff" text-anchor="middle" font-weight="700" >88</text><path d="M468.65 543.00 V539.30 H481.65 V543.00" fill="none" stroke="#393e50" stroke-width="0.75"/><rect x="471.60" y="535.70" width="7.1" height="5.4" rx="0.8" fill="#08080a"/><text x="475.15" y="539.75" font-size="3.6" fill="#ffffff" text-anchor="middle" font-weight="700" >90</text><path d="M485.45 543.00 V539.30 H498.45 V543.00" fill="none" stroke="#393e50" stroke-width="0.75"/><rect x="488.40" y="535.70" width="7.1" height="5.4" rx="0.8" fill="#08080a"/><text x="491.95" y="539.75" font-size="3.6" fill="#ffffff" text-anchor="middle" font-weight="700" >92</text><path d="M502.25 543.00 V539.30 H515.25 V543.00" fill="none" stroke="#393e50" stroke-width="0.75"/><rect x="505.20" y="535.70" width="7.1" height="5.4" rx="0.8" fill="#08080a"/><text x="508.75" y="539.75" font-size="3.6" fill="#ffffff" text-anchor="middle" font-weight="700" >94</text><text x="378.9" y="539.35" font-size="2.7" fill="#4d515b" text-anchor="start" font-weight="400" >Link</text><text x="393.0" y="539.35" font-size="2.7" fill="#4d515b" text-anchor="start" font-weight="400" >Mode</text><rect x="380.7" y="543.2" width="137.8" height="10" rx="0.8" fill="#ffffff" stroke="#454b5f" stroke-width="0.9"/><rect x="529.40" y="480.70" width="7.1" height="5.4" rx="0.8" fill="#08080a"/><text x="532.95" y="484.75" font-size="3.6" fill="#ffffff" text-anchor="middle" font-weight="700" >32</text><path d="M545.15 488.00 V484.30 H558.15 V488.00" fill="none" stroke="#393e50" stroke-width="0.75"/><rect x="548.10" y="480.70" width="7.1" height="5.4" rx="0.8" fill="#08080a"/><text x="551.65" y="484.75" font-size="3.6" fill="#ffffff" text-anchor="middle" font-weight="700" >34</text><path d="M561.95 488.00 V484.30 H574.95 V488.00" fill="none" stroke="#393e50" stroke-width="0.75"/><rect x="564.90" y="480.70" width="7.1" height="5.4" rx="0.8" fill="#08080a"/><text x="568.45" y="484.75" font-size="3.6" fill="#ffffff" text-anchor="middle" font-weight="700" >36</text><path d="M578.75 488.00 V484.30 H591.75 V488.00" fill="none" stroke="#393e50" stroke-width="0.75"/><rect x="581.70" y="480.70" width="7.1" height="5.4" rx="0.8" fill="#08080a"/><text x="585.25" y="484.75" font-size="3.6" fill="#ffffff" text-anchor="middle" font-weight="700" >38</text><path d="M595.55 488.00 V484.30 H608.55 V488.00" fill="none" stroke="#393e50" stroke-width="0.75"/><rect x="598.50" y="480.70" width="7.1" height="5.4" rx="0.8" fill="#08080a"/><text x="602.05" y="484.75" font-size="3.6" fill="#ffffff" text-anchor="middle" font-weight="700" >40</text><path d="M612.35 488.00 V484.30 H625.35 V488.00" fill="none" stroke="#393e50" stroke-width="0.75"/><rect x="615.30" y="480.70" width="7.1" height="5.4" rx="0.8" fill="#08080a"/><text x="618.85" y="484.75" font-size="3.6" fill="#ffffff" text-anchor="middle" font-weight="700" >42</text><path d="M629.15 488.00 V484.30 H642.15 V488.00" fill="none" stroke="#393e50" stroke-width="0.75"/><rect x="632.10" y="480.70" width="7.1" height="5.4" rx="0.8" fill="#08080a"/><text x="635.65" y="484.75" font-size="3.6" fill="#ffffff" text-anchor="middle" font-weight="700" >44</text><path d="M645.95 488.00 V484.30 H658.95 V488.00" fill="none" stroke="#393e50" stroke-width="0.75"/><rect x="648.90" y="480.70" width="7.1" height="5.4" rx="0.8" fill="#08080a"/><text x="652.45" y="484.75" font-size="3.6" fill="#ffffff" text-anchor="middle" font-weight="700" >46</text><text x="522.6" y="484.35" font-size="2.7" fill="#4d515b" text-anchor="start" font-weight="400" >Link</text><text x="536.7" y="484.35" font-size="2.7" fill="#4d515b" text-anchor="start" font-weight="400" >Mode</text><rect x="524.4" y="488" width="137.8" height="34.4" rx="0.8" fill="#ffffff" stroke="#454b5f" stroke-width="0.9"/><g transform="translate(527.5 490.8)"><rect x="0" y="0" width="14.6" height="13.2" fill="#2fc42d"/><rect x="0.8" y="0.8" width="13" height="11.6" fill="#1d9b1c"/><path d="M2.4 6.6 L7.3 2.9 L12.2 6.6 Z" fill="#0f7413"/><rect x="2.2" y="7" width="10.2" height="4.9" fill="#26b024"/><path d="M1.5 6.5 L7.3 1.9 L13.1 6.5" fill="none" stroke="#4ad446" stroke-width="0.9"/><path d="M2 6.9 H12.6" stroke="#0f7413" stroke-width="0.8"/><rect x="4" y="8.2" width="6.6" height="2.6" fill="#4ad446" opacity="0.4"/></g><g transform="translate(527.5 506.1)"><rect x="0" y="0" width="14.6" height="13.2" fill="#2fc42d"/><rect x="0.8" y="0.8" width="13" height="11.6" fill="#1d9b1c"/><path d="M2.4 6.6 L7.3 2.9 L12.2 6.6 Z" fill="#0f7413"/><rect x="2.2" y="7" width="10.2" height="4.9" fill="#26b024"/><path d="M1.5 6.5 L7.3 1.9 L13.1 6.5" fill="none" stroke="#4ad446" stroke-width="0.9"/><path d="M2 6.9 H12.6" stroke="#0f7413" stroke-width="0.8"/><rect x="4" y="8.2" width="6.6" height="2.6" fill="#4ad446" opacity="0.4"/></g><g transform="translate(544.3 490.8)"><rect x="0" y="0" width="14.6" height="13.2" fill="#2fc42d"/><rect x="0.8" y="0.8" width="13" height="11.6" fill="#1d9b1c"/><path d="M2.4 6.6 L7.3 2.9 L12.2 6.6 Z" fill="#0f7413"/><rect x="2.2" y="7" width="10.2" height="4.9" fill="#26b024"/><path d="M1.5 6.5 L7.3 1.9 L13.1 6.5" fill="none" stroke="#4ad446" stroke-width="0.9"/><path d="M2 6.9 H12.6" stroke="#0f7413" stroke-width="0.8"/><rect x="4" y="8.2" width="6.6" height="2.6" fill="#4ad446" opacity="0.4"/></g><g transform="translate(544.3 506.1)"><rect x="0" y="0" width="14.6" height="13.2" fill="#2fc42d"/><rect x="0.8" y="0.8" width="13" height="11.6" fill="#1d9b1c"/><path d="M2.4 6.6 L7.3 2.9 L12.2 6.6 Z" fill="#0f7413"/><rect x="2.2" y="7" width="10.2" height="4.9" fill="#26b024"/><path d="M1.5 6.5 L7.3 1.9 L13.1 6.5" fill="none" stroke="#4ad446" stroke-width="0.9"/><path d="M2 6.9 H12.6" stroke="#0f7413" stroke-width="0.8"/><rect x="4" y="8.2" width="6.6" height="2.6" fill="#4ad446" opacity="0.4"/></g><g transform="translate(561.1 490.8)"><rect x="0" y="0" width="14.6" height="13.2" fill="#2fc42d"/><rect x="0.8" y="0.8" width="13" height="11.6" fill="#1d9b1c"/><path d="M2.4 6.6 L7.3 2.9 L12.2 6.6 Z" fill="#0f7413"/><rect x="2.2" y="7" width="10.2" height="4.9" fill="#26b024"/><path d="M1.5 6.5 L7.3 1.9 L13.1 6.5" fill="none" stroke="#4ad446" stroke-width="0.9"/><path d="M2 6.9 H12.6" stroke="#0f7413" stroke-width="0.8"/><rect x="4" y="8.2" width="6.6" height="2.6" fill="#4ad446" opacity="0.4"/></g><g transform="translate(561.1 506.1)"><rect x="0" y="0" width="14.6" height="13.2" fill="#2fc42d"/><rect x="0.8" y="0.8" width="13" height="11.6" fill="#1d9b1c"/><path d="M2.4 6.6 L7.3 2.9 L12.2 6.6 Z" fill="#0f7413"/><rect x="2.2" y="7" width="10.2" height="4.9" fill="#26b024"/><path d="M1.5 6.5 L7.3 1.9 L13.1 6.5" fill="none" stroke="#4ad446" stroke-width="0.9"/><path d="M2 6.9 H12.6" stroke="#0f7413" stroke-width="0.8"/><rect x="4" y="8.2" width="6.6" height="2.6" fill="#4ad446" opacity="0.4"/></g><g transform="translate(577.9 490.8)"><rect x="0" y="0" width="14.6" height="13.2" fill="#2fc42d"/><rect x="0.8" y="0.8" width="13" height="11.6" fill="#1d9b1c"/><path d="M2.4 6.6 L7.3 2.9 L12.2 6.6 Z" fill="#0f7413"/><rect x="2.2" y="7" width="10.2" height="4.9" fill="#26b024"/><path d="M1.5 6.5 L7.3 1.9 L13.1 6.5" fill="none" stroke="#4ad446" stroke-width="0.9"/><path d="M2 6.9 H12.6" stroke="#0f7413" stroke-width="0.8"/><rect x="4" y="8.2" width="6.6" height="2.6" fill="#4ad446" opacity="0.4"/></g><g transform="translate(577.9 506.1)"><rect x="0" y="0" width="14.6" height="13.2" fill="#2fc42d"/><rect x="0.8" y="0.8" width="13" height="11.6" fill="#1d9b1c"/><path d="M2.4 6.6 L7.3 2.9 L12.2 6.6 Z" fill="#0f7413"/><rect x="2.2" y="7" width="10.2" height="4.9" fill="#26b024"/><path d="M1.5 6.5 L7.3 1.9 L13.1 6.5" fill="none" stroke="#4ad446" stroke-width="0.9"/><path d="M2 6.9 H12.6" stroke="#0f7413" stroke-width="0.8"/><rect x="4" y="8.2" width="6.6" height="2.6" fill="#4ad446" opacity="0.4"/></g><g transform="translate(594.7 490.8)"><rect x="0" y="0" width="14.6" height="13.2" fill="#2fc42d"/><rect x="0.8" y="0.8" width="13" height="11.6" fill="#1d9b1c"/><path d="M2.4 6.6 L7.3 2.9 L12.2 6.6 Z" fill="#0f7413"/><rect x="2.2" y="7" width="10.2" height="4.9" fill="#26b024"/><path d="M1.5 6.5 L7.3 1.9 L13.1 6.5" fill="none" stroke="#4ad446" stroke-width="0.9"/><path d="M2 6.9 H12.6" stroke="#0f7413" stroke-width="0.8"/><rect x="4" y="8.2" width="6.6" height="2.6" fill="#4ad446" opacity="0.4"/></g><g transform="translate(594.7 506.1)"><rect x="0" y="0" width="14.6" height="13.2" fill="#2fc42d"/><rect x="0.8" y="0.8" width="13" height="11.6" fill="#1d9b1c"/><path d="M2.4 6.6 L7.3 2.9 L12.2 6.6 Z" fill="#0f7413"/><rect x="2.2" y="7" width="10.2" height="4.9" fill="#26b024"/><path d="M1.5 6.5 L7.3 1.9 L13.1 6.5" fill="none" stroke="#4ad446" stroke-width="0.9"/><path d="M2 6.9 H12.6" stroke="#0f7413" stroke-width="0.8"/><rect x="4" y="8.2" width="6.6" height="2.6" fill="#4ad446" opacity="0.4"/></g><g transform="translate(611.5 490.8)"><rect x="0" y="0" width="14.6" height="13.2" fill="#2fc42d"/><rect x="0.8" y="0.8" width="13" height="11.6" fill="#1d9b1c"/><path d="M2.4 6.6 L7.3 2.9 L12.2 6.6 Z" fill="#0f7413"/><rect x="2.2" y="7" width="10.2" height="4.9" fill="#26b024"/><path d="M1.5 6.5 L7.3 1.9 L13.1 6.5" fill="none" stroke="#4ad446" stroke-width="0.9"/><path d="M2 6.9 H12.6" stroke="#0f7413" stroke-width="0.8"/><rect x="4" y="8.2" width="6.6" height="2.6" fill="#4ad446" opacity="0.4"/></g><g transform="translate(611.5 506.1)"><rect x="0" y="0" width="14.6" height="13.2" fill="#2fc42d"/><rect x="0.8" y="0.8" width="13" height="11.6" fill="#1d9b1c"/><path d="M2.4 6.6 L7.3 2.9 L12.2 6.6 Z" fill="#0f7413"/><rect x="2.2" y="7" width="10.2" height="4.9" fill="#26b024"/><path d="M1.5 6.5 L7.3 1.9 L13.1 6.5" fill="none" stroke="#4ad446" stroke-width="0.9"/><path d="M2 6.9 H12.6" stroke="#0f7413" stroke-width="0.8"/><rect x="4" y="8.2" width="6.6" height="2.6" fill="#4ad446" opacity="0.4"/></g><g transform="translate(628.3 490.8)"><rect x="0" y="0" width="14.6" height="13.2" fill="#2fc42d"/><rect x="0.8" y="0.8" width="13" height="11.6" fill="#1d9b1c"/><path d="M2.4 6.6 L7.3 2.9 L12.2 6.6 Z" fill="#0f7413"/><rect x="2.2" y="7" width="10.2" height="4.9" fill="#26b024"/><path d="M1.5 6.5 L7.3 1.9 L13.1 6.5" fill="none" stroke="#4ad446" stroke-width="0.9"/><path d="M2 6.9 H12.6" stroke="#0f7413" stroke-width="0.8"/><rect x="4" y="8.2" width="6.6" height="2.6" fill="#4ad446" opacity="0.4"/></g><g transform="translate(628.3 506.1)"><rect x="0" y="0" width="14.6" height="13.2" fill="#2fc42d"/><rect x="0.8" y="0.8" width="13" height="11.6" fill="#1d9b1c"/><path d="M2.4 6.6 L7.3 2.9 L12.2 6.6 Z" fill="#0f7413"/><rect x="2.2" y="7" width="10.2" height="4.9" fill="#26b024"/><path d="M1.5 6.5 L7.3 1.9 L13.1 6.5" fill="none" stroke="#4ad446" stroke-width="0.9"/><path d="M2 6.9 H12.6" stroke="#0f7413" stroke-width="0.8"/><rect x="4" y="8.2" width="6.6" height="2.6" fill="#4ad446" opacity="0.4"/></g><g transform="translate(645.1 490.8)"><rect x="0" y="0" width="14.6" height="13.2" fill="#2fc42d"/><rect x="0.8" y="0.8" width="13" height="11.6" fill="#1d9b1c"/><path d="M2.4 6.6 L7.3 2.9 L12.2 6.6 Z" fill="#0f7413"/><rect x="2.2" y="7" width="10.2" height="4.9" fill="#26b024"/><path d="M1.5 6.5 L7.3 1.9 L13.1 6.5" fill="none" stroke="#4ad446" stroke-width="0.9"/><path d="M2 6.9 H12.6" stroke="#0f7413" stroke-width="0.8"/><rect x="4" y="8.2" width="6.6" height="2.6" fill="#4ad446" opacity="0.4"/></g><g transform="translate(645.1 506.1)"><rect x="0" y="0" width="14.6" height="13.2" fill="#2fc42d"/><rect x="0.8" y="0.8" width="13" height="11.6" fill="#1d9b1c"/><path d="M2.4 6.6 L7.3 2.9 L12.2 6.6 Z" fill="#0f7413"/><rect x="2.2" y="7" width="10.2" height="4.9" fill="#26b024"/><path d="M1.5 6.5 L7.3 1.9 L13.1 6.5" fill="none" stroke="#4ad446" stroke-width="0.9"/><path d="M2 6.9 H12.6" stroke="#0f7413" stroke-width="0.8"/><rect x="4" y="8.2" width="6.6" height="2.6" fill="#4ad446" opacity="0.4"/></g><rect x="529.40" y="523.70" width="7.1" height="5.4" rx="0.8" fill="#08080a"/><text x="532.95" y="527.75" font-size="3.6" fill="#ffffff" text-anchor="middle" font-weight="700" >33</text><path d="M545.15 522.20 V525.50 H558.15 V522.20" fill="none" stroke="#393e50" stroke-width="0.75"/><rect x="548.10" y="523.70" width="7.1" height="5.4" rx="0.8" fill="#08080a"/><text x="551.65" y="527.75" font-size="3.6" fill="#ffffff" text-anchor="middle" font-weight="700" >35</text><path d="M561.95 522.20 V525.50 H574.95 V522.20" fill="none" stroke="#393e50" stroke-width="0.75"/><rect x="564.90" y="523.70" width="7.1" height="5.4" rx="0.8" fill="#08080a"/><text x="568.45" y="527.75" font-size="3.6" fill="#ffffff" text-anchor="middle" font-weight="700" >37</text><path d="M578.75 522.20 V525.50 H591.75 V522.20" fill="none" stroke="#393e50" stroke-width="0.75"/><rect x="581.70" y="523.70" width="7.1" height="5.4" rx="0.8" fill="#08080a"/><text x="585.25" y="527.75" font-size="3.6" fill="#ffffff" text-anchor="middle" font-weight="700" >39</text><path d="M595.55 522.20 V525.50 H608.55 V522.20" fill="none" stroke="#393e50" stroke-width="0.75"/><rect x="598.50" y="523.70" width="7.1" height="5.4" rx="0.8" fill="#08080a"/><text x="602.05" y="527.75" font-size="3.6" fill="#ffffff" text-anchor="middle" font-weight="700" >41</text><path d="M612.35 522.20 V525.50 H625.35 V522.20" fill="none" stroke="#393e50" stroke-width="0.75"/><rect x="615.30" y="523.70" width="7.1" height="5.4" rx="0.8" fill="#08080a"/><text x="618.85" y="527.75" font-size="3.6" fill="#ffffff" text-anchor="middle" font-weight="700" >43</text><path d="M629.15 522.20 V525.50 H642.15 V522.20" fill="none" stroke="#393e50" stroke-width="0.75"/><rect x="632.10" y="523.70" width="7.1" height="5.4" rx="0.8" fill="#08080a"/><text x="635.65" y="527.75" font-size="3.6" fill="#ffffff" text-anchor="middle" font-weight="700" >45</text><path d="M645.95 522.20 V525.50 H658.95 V522.20" fill="none" stroke="#393e50" stroke-width="0.75"/><rect x="648.90" y="523.70" width="7.1" height="5.4" rx="0.8" fill="#08080a"/><text x="652.45" y="527.75" font-size="3.6" fill="#ffffff" text-anchor="middle" font-weight="700" >47</text><text x="522.6" y="527.35" font-size="2.7" fill="#4d515b" text-anchor="start" font-weight="400" >Link</text><text x="536.7" y="527.35" font-size="2.7" fill="#4d515b" text-anchor="start" font-weight="400" >Mode</text><rect x="529.40" y="535.70" width="7.1" height="5.4" rx="0.8" fill="#08080a"/><text x="532.95" y="539.75" font-size="3.6" fill="#ffffff" text-anchor="middle" font-weight="700" >96</text><path d="M545.15 543.00 V539.30 H558.15 V543.00" fill="none" stroke="#393e50" stroke-width="0.75"/><rect x="548.10" y="535.70" width="7.1" height="5.4" rx="0.8" fill="#08080a"/><text x="551.65" y="539.75" font-size="3.6" fill="#ffffff" text-anchor="middle" font-weight="700" >98</text><path d="M561.95 543.00 V539.30 H574.95 V543.00" fill="none" stroke="#393e50" stroke-width="0.75"/><rect x="564.90" y="535.70" width="7.1" height="5.4" rx="0.8" fill="#08080a"/><text x="568.45" y="539.75" font-size="3.6" fill="#ffffff" text-anchor="middle" font-weight="700" >100</text><path d="M578.75 543.00 V539.30 H591.75 V543.00" fill="none" stroke="#393e50" stroke-width="0.75"/><rect x="581.70" y="535.70" width="7.1" height="5.4" rx="0.8" fill="#08080a"/><text x="585.25" y="539.75" font-size="3.6" fill="#ffffff" text-anchor="middle" font-weight="700" >102</text><path d="M595.55 543.00 V539.30 H608.55 V543.00" fill="none" stroke="#393e50" stroke-width="0.75"/><rect x="598.50" y="535.70" width="7.1" height="5.4" rx="0.8" fill="#08080a"/><text x="602.05" y="539.75" font-size="3.6" fill="#ffffff" text-anchor="middle" font-weight="700" >104</text><path d="M612.35 543.00 V539.30 H625.35 V543.00" fill="none" stroke="#393e50" stroke-width="0.75"/><rect x="615.30" y="535.70" width="7.1" height="5.4" rx="0.8" fill="#08080a"/><text x="618.85" y="539.75" font-size="3.6" fill="#ffffff" text-anchor="middle" font-weight="700" >106</text><path d="M629.15 543.00 V539.30 H642.15 V543.00" fill="none" stroke="#393e50" stroke-width="0.75"/><rect x="632.10" y="535.70" width="7.1" height="5.4" rx="0.8" fill="#08080a"/><text x="635.65" y="539.75" font-size="3.6" fill="#ffffff" text-anchor="middle" font-weight="700" >108</text><path d="M645.95 543.00 V539.30 H658.95 V543.00" fill="none" stroke="#393e50" stroke-width="0.75"/><rect x="648.90" y="535.70" width="7.1" height="5.4" rx="0.8" fill="#08080a"/><text x="652.45" y="539.75" font-size="3.6" fill="#ffffff" text-anchor="middle" font-weight="700" >110</text><text x="522.6" y="539.35" font-size="2.7" fill="#4d515b" text-anchor="start" font-weight="400" >Link</text><text x="536.7" y="539.35" font-size="2.7" fill="#4d515b" text-anchor="start" font-weight="400" >Mode</text><rect x="524.4" y="543.2" width="137.8" height="10" rx="0.8" fill="#ffffff" stroke="#454b5f" stroke-width="0.9"/><rect x="673.10" y="480.70" width="7.1" height="5.4" rx="0.8" fill="#08080a"/><text x="676.65" y="484.75" font-size="3.6" fill="#ffffff" text-anchor="middle" font-weight="700" >48</text><path d="M688.85 488.00 V484.30 H701.85 V488.00" fill="none" stroke="#393e50" stroke-width="0.75"/><rect x="691.80" y="480.70" width="7.1" height="5.4" rx="0.8" fill="#08080a"/><text x="695.35" y="484.75" font-size="3.6" fill="#ffffff" text-anchor="middle" font-weight="700" >50</text><path d="M705.65 488.00 V484.30 H718.65 V488.00" fill="none" stroke="#393e50" stroke-width="0.75"/><rect x="708.60" y="480.70" width="7.1" height="5.4" rx="0.8" fill="#08080a"/><text x="712.15" y="484.75" font-size="3.6" fill="#ffffff" text-anchor="middle" font-weight="700" >52</text><path d="M722.45 488.00 V484.30 H735.45 V488.00" fill="none" stroke="#393e50" stroke-width="0.75"/><rect x="725.40" y="480.70" width="7.1" height="5.4" rx="0.8" fill="#08080a"/><text x="728.95" y="484.75" font-size="3.6" fill="#ffffff" text-anchor="middle" font-weight="700" >54</text><path d="M739.25 488.00 V484.30 H752.25 V488.00" fill="none" stroke="#393e50" stroke-width="0.75"/><rect x="742.20" y="480.70" width="7.1" height="5.4" rx="0.8" fill="#08080a"/><text x="745.75" y="484.75" font-size="3.6" fill="#ffffff" text-anchor="middle" font-weight="700" >56</text><path d="M756.05 488.00 V484.30 H769.05 V488.00" fill="none" stroke="#393e50" stroke-width="0.75"/><rect x="759.00" y="480.70" width="7.1" height="5.4" rx="0.8" fill="#08080a"/><text x="762.55" y="484.75" font-size="3.6" fill="#ffffff" text-anchor="middle" font-weight="700" >58</text><path d="M772.85 488.00 V484.30 H785.85 V488.00" fill="none" stroke="#393e50" stroke-width="0.75"/><rect x="775.80" y="480.70" width="7.1" height="5.4" rx="0.8" fill="#08080a"/><text x="779.35" y="484.75" font-size="3.6" fill="#ffffff" text-anchor="middle" font-weight="700" >60</text><path d="M789.65 488.00 V484.30 H802.65 V488.00" fill="none" stroke="#393e50" stroke-width="0.75"/><rect x="792.60" y="480.70" width="7.1" height="5.4" rx="0.8" fill="#08080a"/><text x="796.15" y="484.75" font-size="3.6" fill="#ffffff" text-anchor="middle" font-weight="700" >62</text><text x="666.3" y="484.35" font-size="2.7" fill="#4d515b" text-anchor="start" font-weight="400" >Link</text><text x="680.4" y="484.35" font-size="2.7" fill="#4d515b" text-anchor="start" font-weight="400" >Mode</text><rect x="668.1" y="488" width="137.8" height="34.4" rx="0.8" fill="#ffffff" stroke="#454b5f" stroke-width="0.9"/><g transform="translate(671.2 490.8)"><rect x="0" y="0" width="14.6" height="13.2" fill="#2fc42d"/><rect x="0.8" y="0.8" width="13" height="11.6" fill="#1d9b1c"/><path d="M2.4 6.6 L7.3 2.9 L12.2 6.6 Z" fill="#0f7413"/><rect x="2.2" y="7" width="10.2" height="4.9" fill="#26b024"/><path d="M1.5 6.5 L7.3 1.9 L13.1 6.5" fill="none" stroke="#4ad446" stroke-width="0.9"/><path d="M2 6.9 H12.6" stroke="#0f7413" stroke-width="0.8"/><rect x="4" y="8.2" width="6.6" height="2.6" fill="#4ad446" opacity="0.4"/></g><g transform="translate(671.2 506.1)"><rect x="0" y="0" width="14.6" height="13.2" fill="#2fc42d"/><rect x="0.8" y="0.8" width="13" height="11.6" fill="#1d9b1c"/><path d="M2.4 6.6 L7.3 2.9 L12.2 6.6 Z" fill="#0f7413"/><rect x="2.2" y="7" width="10.2" height="4.9" fill="#26b024"/><path d="M1.5 6.5 L7.3 1.9 L13.1 6.5" fill="none" stroke="#4ad446" stroke-width="0.9"/><path d="M2 6.9 H12.6" stroke="#0f7413" stroke-width="0.8"/><rect x="4" y="8.2" width="6.6" height="2.6" fill="#4ad446" opacity="0.4"/></g><g transform="translate(688.0 490.8)"><rect x="0" y="0" width="14.6" height="13.2" fill="#2fc42d"/><rect x="0.8" y="0.8" width="13" height="11.6" fill="#1d9b1c"/><path d="M2.4 6.6 L7.3 2.9 L12.2 6.6 Z" fill="#0f7413"/><rect x="2.2" y="7" width="10.2" height="4.9" fill="#26b024"/><path d="M1.5 6.5 L7.3 1.9 L13.1 6.5" fill="none" stroke="#4ad446" stroke-width="0.9"/><path d="M2 6.9 H12.6" stroke="#0f7413" stroke-width="0.8"/><rect x="4" y="8.2" width="6.6" height="2.6" fill="#4ad446" opacity="0.4"/></g><g transform="translate(688.0 506.1)"><rect x="0" y="0" width="14.6" height="13.2" fill="#2fc42d"/><rect x="0.8" y="0.8" width="13" height="11.6" fill="#1d9b1c"/><path d="M2.4 6.6 L7.3 2.9 L12.2 6.6 Z" fill="#0f7413"/><rect x="2.2" y="7" width="10.2" height="4.9" fill="#26b024"/><path d="M1.5 6.5 L7.3 1.9 L13.1 6.5" fill="none" stroke="#4ad446" stroke-width="0.9"/><path d="M2 6.9 H12.6" stroke="#0f7413" stroke-width="0.8"/><rect x="4" y="8.2" width="6.6" height="2.6" fill="#4ad446" opacity="0.4"/></g><g transform="translate(704.8 490.8)"><rect x="0" y="0" width="14.6" height="13.2" fill="#2fc42d"/><rect x="0.8" y="0.8" width="13" height="11.6" fill="#1d9b1c"/><path d="M2.4 6.6 L7.3 2.9 L12.2 6.6 Z" fill="#0f7413"/><rect x="2.2" y="7" width="10.2" height="4.9" fill="#26b024"/><path d="M1.5 6.5 L7.3 1.9 L13.1 6.5" fill="none" stroke="#4ad446" stroke-width="0.9"/><path d="M2 6.9 H12.6" stroke="#0f7413" stroke-width="0.8"/><rect x="4" y="8.2" width="6.6" height="2.6" fill="#4ad446" opacity="0.4"/></g><g transform="translate(704.8 506.1)"><rect x="0" y="0" width="14.6" height="13.2" fill="#2fc42d"/><rect x="0.8" y="0.8" width="13" height="11.6" fill="#1d9b1c"/><path d="M2.4 6.6 L7.3 2.9 L12.2 6.6 Z" fill="#0f7413"/><rect x="2.2" y="7" width="10.2" height="4.9" fill="#26b024"/><path d="M1.5 6.5 L7.3 1.9 L13.1 6.5" fill="none" stroke="#4ad446" stroke-width="0.9"/><path d="M2 6.9 H12.6" stroke="#0f7413" stroke-width="0.8"/><rect x="4" y="8.2" width="6.6" height="2.6" fill="#4ad446" opacity="0.4"/></g><g transform="translate(721.6 490.8)"><rect x="0" y="0" width="14.6" height="13.2" fill="#2fc42d"/><rect x="0.8" y="0.8" width="13" height="11.6" fill="#1d9b1c"/><path d="M2.4 6.6 L7.3 2.9 L12.2 6.6 Z" fill="#0f7413"/><rect x="2.2" y="7" width="10.2" height="4.9" fill="#26b024"/><path d="M1.5 6.5 L7.3 1.9 L13.1 6.5" fill="none" stroke="#4ad446" stroke-width="0.9"/><path d="M2 6.9 H12.6" stroke="#0f7413" stroke-width="0.8"/><rect x="4" y="8.2" width="6.6" height="2.6" fill="#4ad446" opacity="0.4"/></g><g transform="translate(721.6 506.1)"><rect x="0" y="0" width="14.6" height="13.2" fill="#2fc42d"/><rect x="0.8" y="0.8" width="13" height="11.6" fill="#1d9b1c"/><path d="M2.4 6.6 L7.3 2.9 L12.2 6.6 Z" fill="#0f7413"/><rect x="2.2" y="7" width="10.2" height="4.9" fill="#26b024"/><path d="M1.5 6.5 L7.3 1.9 L13.1 6.5" fill="none" stroke="#4ad446" stroke-width="0.9"/><path d="M2 6.9 H12.6" stroke="#0f7413" stroke-width="0.8"/><rect x="4" y="8.2" width="6.6" height="2.6" fill="#4ad446" opacity="0.4"/></g><g transform="translate(738.4 490.8)"><rect x="0" y="0" width="14.6" height="13.2" fill="#2fc42d"/><rect x="0.8" y="0.8" width="13" height="11.6" fill="#1d9b1c"/><path d="M2.4 6.6 L7.3 2.9 L12.2 6.6 Z" fill="#0f7413"/><rect x="2.2" y="7" width="10.2" height="4.9" fill="#26b024"/><path d="M1.5 6.5 L7.3 1.9 L13.1 6.5" fill="none" stroke="#4ad446" stroke-width="0.9"/><path d="M2 6.9 H12.6" stroke="#0f7413" stroke-width="0.8"/><rect x="4" y="8.2" width="6.6" height="2.6" fill="#4ad446" opacity="0.4"/></g><g transform="translate(738.4 506.1)"><rect x="0" y="0" width="14.6" height="13.2" fill="#2fc42d"/><rect x="0.8" y="0.8" width="13" height="11.6" fill="#1d9b1c"/><path d="M2.4 6.6 L7.3 2.9 L12.2 6.6 Z" fill="#0f7413"/><rect x="2.2" y="7" width="10.2" height="4.9" fill="#26b024"/><path d="M1.5 6.5 L7.3 1.9 L13.1 6.5" fill="none" stroke="#4ad446" stroke-width="0.9"/><path d="M2 6.9 H12.6" stroke="#0f7413" stroke-width="0.8"/><rect x="4" y="8.2" width="6.6" height="2.6" fill="#4ad446" opacity="0.4"/></g><g transform="translate(755.2 490.8)"><rect x="0" y="0" width="14.6" height="13.2" fill="#2fc42d"/><rect x="0.8" y="0.8" width="13" height="11.6" fill="#1d9b1c"/><path d="M2.4 6.6 L7.3 2.9 L12.2 6.6 Z" fill="#0f7413"/><rect x="2.2" y="7" width="10.2" height="4.9" fill="#26b024"/><path d="M1.5 6.5 L7.3 1.9 L13.1 6.5" fill="none" stroke="#4ad446" stroke-width="0.9"/><path d="M2 6.9 H12.6" stroke="#0f7413" stroke-width="0.8"/><rect x="4" y="8.2" width="6.6" height="2.6" fill="#4ad446" opacity="0.4"/></g><g transform="translate(755.2 506.1)"><rect x="0" y="0" width="14.6" height="13.2" fill="#2fc42d"/><rect x="0.8" y="0.8" width="13" height="11.6" fill="#1d9b1c"/><path d="M2.4 6.6 L7.3 2.9 L12.2 6.6 Z" fill="#0f7413"/><rect x="2.2" y="7" width="10.2" height="4.9" fill="#26b024"/><path d="M1.5 6.5 L7.3 1.9 L13.1 6.5" fill="none" stroke="#4ad446" stroke-width="0.9"/><path d="M2 6.9 H12.6" stroke="#0f7413" stroke-width="0.8"/><rect x="4" y="8.2" width="6.6" height="2.6" fill="#4ad446" opacity="0.4"/></g><g transform="translate(772.0 490.8)"><rect x="0" y="0" width="14.6" height="13.2" fill="#2fc42d"/><rect x="0.8" y="0.8" width="13" height="11.6" fill="#1d9b1c"/><path d="M2.4 6.6 L7.3 2.9 L12.2 6.6 Z" fill="#0f7413"/><rect x="2.2" y="7" width="10.2" height="4.9" fill="#26b024"/><path d="M1.5 6.5 L7.3 1.9 L13.1 6.5" fill="none" stroke="#4ad446" stroke-width="0.9"/><path d="M2 6.9 H12.6" stroke="#0f7413" stroke-width="0.8"/><rect x="4" y="8.2" width="6.6" height="2.6" fill="#4ad446" opacity="0.4"/></g><g transform="translate(772.0 506.1)"><rect x="0" y="0" width="14.6" height="13.2" fill="#2fc42d"/><rect x="0.8" y="0.8" width="13" height="11.6" fill="#1d9b1c"/><path d="M2.4 6.6 L7.3 2.9 L12.2 6.6 Z" fill="#0f7413"/><rect x="2.2" y="7" width="10.2" height="4.9" fill="#26b024"/><path d="M1.5 6.5 L7.3 1.9 L13.1 6.5" fill="none" stroke="#4ad446" stroke-width="0.9"/><path d="M2 6.9 H12.6" stroke="#0f7413" stroke-width="0.8"/><rect x="4" y="8.2" width="6.6" height="2.6" fill="#4ad446" opacity="0.4"/></g><g transform="translate(788.8 490.8)"><rect x="0" y="0" width="14.6" height="13.2" fill="#2fc42d"/><rect x="0.8" y="0.8" width="13" height="11.6" fill="#1d9b1c"/><path d="M2.4 6.6 L7.3 2.9 L12.2 6.6 Z" fill="#0f7413"/><rect x="2.2" y="7" width="10.2" height="4.9" fill="#26b024"/><path d="M1.5 6.5 L7.3 1.9 L13.1 6.5" fill="none" stroke="#4ad446" stroke-width="0.9"/><path d="M2 6.9 H12.6" stroke="#0f7413" stroke-width="0.8"/><rect x="4" y="8.2" width="6.6" height="2.6" fill="#4ad446" opacity="0.4"/></g><g transform="translate(788.8 506.1)"><rect x="0" y="0" width="14.6" height="13.2" fill="#2fc42d"/><rect x="0.8" y="0.8" width="13" height="11.6" fill="#1d9b1c"/><path d="M2.4 6.6 L7.3 2.9 L12.2 6.6 Z" fill="#0f7413"/><rect x="2.2" y="7" width="10.2" height="4.9" fill="#26b024"/><path d="M1.5 6.5 L7.3 1.9 L13.1 6.5" fill="none" stroke="#4ad446" stroke-width="0.9"/><path d="M2 6.9 H12.6" stroke="#0f7413" stroke-width="0.8"/><rect x="4" y="8.2" width="6.6" height="2.6" fill="#4ad446" opacity="0.4"/></g><rect x="673.10" y="523.70" width="7.1" height="5.4" rx="0.8" fill="#08080a"/><text x="676.65" y="527.75" font-size="3.6" fill="#ffffff" text-anchor="middle" font-weight="700" >49</text><path d="M688.85 522.20 V525.50 H701.85 V522.20" fill="none" stroke="#393e50" stroke-width="0.75"/><rect x="691.80" y="523.70" width="7.1" height="5.4" rx="0.8" fill="#08080a"/><text x="695.35" y="527.75" font-size="3.6" fill="#ffffff" text-anchor="middle" font-weight="700" >51</text><path d="M705.65 522.20 V525.50 H718.65 V522.20" fill="none" stroke="#393e50" stroke-width="0.75"/><rect x="708.60" y="523.70" width="7.1" height="5.4" rx="0.8" fill="#08080a"/><text x="712.15" y="527.75" font-size="3.6" fill="#ffffff" text-anchor="middle" font-weight="700" >53</text><path d="M722.45 522.20 V525.50 H735.45 V522.20" fill="none" stroke="#393e50" stroke-width="0.75"/><rect x="725.40" y="523.70" width="7.1" height="5.4" rx="0.8" fill="#08080a"/><text x="728.95" y="527.75" font-size="3.6" fill="#ffffff" text-anchor="middle" font-weight="700" >55</text><path d="M739.25 522.20 V525.50 H752.25 V522.20" fill="none" stroke="#393e50" stroke-width="0.75"/><rect x="742.20" y="523.70" width="7.1" height="5.4" rx="0.8" fill="#08080a"/><text x="745.75" y="527.75" font-size="3.6" fill="#ffffff" text-anchor="middle" font-weight="700" >57</text><path d="M756.05 522.20 V525.50 H769.05 V522.20" fill="none" stroke="#393e50" stroke-width="0.75"/><rect x="759.00" y="523.70" width="7.1" height="5.4" rx="0.8" fill="#08080a"/><text x="762.55" y="527.75" font-size="3.6" fill="#ffffff" text-anchor="middle" font-weight="700" >59</text><path d="M772.85 522.20 V525.50 H785.85 V522.20" fill="none" stroke="#393e50" stroke-width="0.75"/><rect x="775.80" y="523.70" width="7.1" height="5.4" rx="0.8" fill="#08080a"/><text x="779.35" y="527.75" font-size="3.6" fill="#ffffff" text-anchor="middle" font-weight="700" >61</text><path d="M789.65 522.20 V525.50 H802.65 V522.20" fill="none" stroke="#393e50" stroke-width="0.75"/><rect x="792.60" y="523.70" width="7.1" height="5.4" rx="0.8" fill="#08080a"/><text x="796.15" y="527.75" font-size="3.6" fill="#ffffff" text-anchor="middle" font-weight="700" >63</text><text x="666.3" y="527.35" font-size="2.7" fill="#4d515b" text-anchor="start" font-weight="400" >Link</text><text x="680.4" y="527.35" font-size="2.7" fill="#4d515b" text-anchor="start" font-weight="400" >Mode</text><rect x="673.10" y="535.70" width="7.1" height="5.4" rx="0.8" fill="#08080a"/><text x="676.65" y="539.75" font-size="3.6" fill="#ffffff" text-anchor="middle" font-weight="700" >112</text><path d="M688.85 543.00 V539.30 H701.85 V543.00" fill="none" stroke="#393e50" stroke-width="0.75"/><rect x="691.80" y="535.70" width="7.1" height="5.4" rx="0.8" fill="#08080a"/><text x="695.35" y="539.75" font-size="3.6" fill="#ffffff" text-anchor="middle" font-weight="700" >114</text><path d="M705.65 543.00 V539.30 H718.65 V543.00" fill="none" stroke="#393e50" stroke-width="0.75"/><rect x="708.60" y="535.70" width="7.1" height="5.4" rx="0.8" fill="#08080a"/><text x="712.15" y="539.75" font-size="3.6" fill="#ffffff" text-anchor="middle" font-weight="700" >116</text><path d="M722.45 543.00 V539.30 H735.45 V543.00" fill="none" stroke="#393e50" stroke-width="0.75"/><rect x="725.40" y="535.70" width="7.1" height="5.4" rx="0.8" fill="#08080a"/><text x="728.95" y="539.75" font-size="3.6" fill="#ffffff" text-anchor="middle" font-weight="700" >118</text><path d="M739.25 543.00 V539.30 H752.25 V543.00" fill="none" stroke="#393e50" stroke-width="0.75"/><rect x="742.20" y="535.70" width="7.1" height="5.4" rx="0.8" fill="#08080a"/><text x="745.75" y="539.75" font-size="3.6" fill="#ffffff" text-anchor="middle" font-weight="700" >120</text><path d="M756.05 543.00 V539.30 H769.05 V543.00" fill="none" stroke="#393e50" stroke-width="0.75"/><rect x="759.00" y="535.70" width="7.1" height="5.4" rx="0.8" fill="#08080a"/><text x="762.55" y="539.75" font-size="3.6" fill="#ffffff" text-anchor="middle" font-weight="700" >122</text><path d="M772.85 543.00 V539.30 H785.85 V543.00" fill="none" stroke="#393e50" stroke-width="0.75"/><rect x="775.80" y="535.70" width="7.1" height="5.4" rx="0.8" fill="#08080a"/><text x="779.35" y="539.75" font-size="3.6" fill="#ffffff" text-anchor="middle" font-weight="700" >124</text><path d="M789.65 543.00 V539.30 H802.65 V543.00" fill="none" stroke="#393e50" stroke-width="0.75"/><rect x="792.60" y="535.70" width="7.1" height="5.4" rx="0.8" fill="#08080a"/><text x="796.15" y="539.75" font-size="3.6" fill="#ffffff" text-anchor="middle" font-weight="700" >126</text><text x="666.3" y="539.35" font-size="2.7" fill="#4d515b" text-anchor="start" font-weight="400" >Link</text><text x="680.4" y="539.35" font-size="2.7" fill="#4d515b" text-anchor="start" font-weight="400" >Mode</text><rect x="668.1" y="543.2" width="137.8" height="10" rx="0.8" fill="#ffffff" stroke="#454b5f" stroke-width="0.9"/><text x="0" y="0" font-size="2.3" fill="#6b6f78" text-anchor="middle" transform="translate(816.2 488) rotate(90)">Port 0-63 Base</text><text x="0" y="0" font-size="2.3" fill="#6b6f78" text-anchor="middle" transform="translate(816.2 517) rotate(90)">25GE SFP28</text><text x="0" y="0" font-size="2.3" fill="#6b6f78" text-anchor="middle" transform="translate(816.2 546) rotate(90)">Port 64-127 Base</text></svg>
</body></html>
